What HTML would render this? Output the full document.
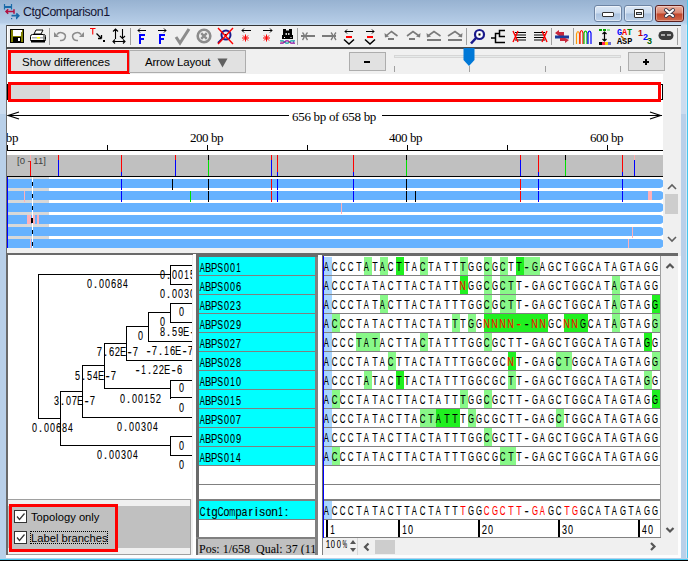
<!DOCTYPE html><html><head><meta charset="utf-8"><style>
*{margin:0;padding:0;box-sizing:border-box}
html,body{width:688px;height:561px;overflow:hidden;position:relative;background:#bcd1ea;font-family:"Liberation Sans",sans-serif}
.a{position:absolute}
.ct{font-family:"Liberation Sans",sans-serif;white-space:nowrap;color:#000;-webkit-text-stroke:0.1px currentColor}
.ct b{display:inline-block;font-weight:normal;text-align:center;height:15px}
.ct i{display:inline-block;font-style:normal}
</style></head><body>
<div class="a" style="left:0px;top:0px;width:688px;height:25px;background:linear-gradient(#97b2d1,#b6cde7 92%,#c4daf0 96%)"></div>
<div class="a" style="left:0px;top:25px;width:6px;height:536px;background:#b9d0e9"></div>
<div class="a" style="left:0px;top:25px;width:6px;height:89px;background:#cbdcef"></div>
<div class="a" style="left:681px;top:25px;width:7px;height:536px;background:#b9d0e9"></div>
<div class="a" style="left:681px;top:25px;width:6px;height:89px;background:#cbdcef"></div>
<div class="a" style="left:686px;top:25px;width:1px;height:536px;background:#d8e6f4"></div>
<div class="a" style="left:687px;top:0px;width:1px;height:561px;background:#46c6ee"></div>
<div class="a" style="left:0px;top:559px;width:688px;height:1px;background:#46c6ee"></div>
<div class="a" style="left:0px;top:560px;width:688px;height:1px;background:#000"></div>
<div class="a " style="left:23px;top:3.74px;font-family:'Liberation Sans';font-size:12.3px;line-height:16px;color:#141432;white-space:nowrap;letter-spacing:-0.4px">CtgComparison1</div>
<div class="a" style="left:594px;top:5px;width:28px;height:17px;border:1px solid #6d84a3;border-radius:3px;background:linear-gradient(#dce8f6 0,#c9daee 48%,#aac2df 52%,#bdd2ea 100%);box-shadow:inset 0 0 0 1px rgba(255,255,255,.5)"><div class="a" style="left:7px;top:6px;width:12px;height:5px;border:1px solid #333;background:#fff;border-radius:1px"></div></div>
<div class="a" style="left:624px;top:5px;width:29px;height:17px;border:1px solid #6d84a3;border-radius:3px;background:linear-gradient(#dce8f6 0,#c9daee 48%,#aac2df 52%,#bdd2ea 100%);box-shadow:inset 0 0 0 1px rgba(255,255,255,.5)"><div class="a" style="left:9px;top:3px;width:10px;height:9px;border:1px solid #333;background:#fff;border-radius:1px"><div class="a" style="left:1px;top:2px;width:6px;height:3px;border:1px solid #333;background:#c0d0e4"></div></div></div>
<div class="a" style="left:655px;top:5px;width:29px;height:17px;border:1px solid #5b1e1e;border-radius:3px;background:linear-gradient(#e9b0a0 0,#d98570 48%,#c2452a 52%,#d06a4e 100%);box-shadow:inset 0 0 0 1px rgba(255,255,255,.35)"><svg class="a" style="left:7px;top:1px" width="14" height="12"><path d="M3 3 L10 9 M10 3 L3 9" stroke="#3a3a4a" stroke-width="4" stroke-linecap="round"/><path d="M3 3 L10 9 M10 3 L3 9" stroke="#fff" stroke-width="2.2" stroke-linecap="round"/></svg></div>
<div class="a" style="left:6px;top:25px;width:675px;height:1px;background:#353535"></div>
<div class="a" style="left:6px;top:26px;width:675px;height:21px;background:#f0f0f0"></div>
<div class="a" style="left:6px;top:25px;width:1px;height:22px;background:#5a5a5a"></div>
<div class="a" style="left:7px;top:26px;width:1px;height:21px;background:#fff"></div>
<div class="a" style="left:6px;top:47px;width:675px;height:2px;background:#4a4a4a"></div>
<div class="a" style="left:6px;top:49px;width:675px;height:204px;background:#f0f0f0"></div>
<div class="a" style="left:6px;top:49px;width:1px;height:204px;background:#6d6d6d"></div>
<div class="a" style="left:8px;top:50px;width:122px;height:24px;border:3px solid #ff0000;background:#e1e1e1"></div>
<div class="a " style="left:22px;top:54.52px;font-family:'Liberation Sans';font-size:11.5px;line-height:15px;color:#000;white-space:nowrap;">Show differences</div>
<div class="a" style="left:129px;top:50px;width:117px;height:23px;border:1px solid #adadad;background:#e1e1e1"></div>
<div class="a " style="left:145px;top:54.52px;font-family:'Liberation Sans';font-size:11.5px;line-height:15px;color:#000;white-space:nowrap;letter-spacing:-0.2px">Arrow Layout</div>
<svg class="a" style="left:217px;top:58px" width="11" height="10"><path d="M0.5 0.5 H10.5 L5.5 9.5 Z" fill="#606060"/></svg>
<div class="a" style="left:349px;top:52px;width:37px;height:19px;border:1px solid #adadad;background:#e1e1e1"><div class="a" style="left:14px;top:8px;width:6px;height:2px;background:#000"></div></div>
<div class="a" style="left:628px;top:52px;width:37px;height:19px;border:1px solid #adadad;background:#e1e1e1"><div class="a" style="left:14px;top:8px;width:6px;height:1.5px;background:#000"></div><div class="a" style="left:16.25px;top:5.75px;width:1.5px;height:6px;background:#000"></div></div>
<div class="a" style="left:394px;top:55px;width:227px;height:3px;background:#e7eaea;border:1px solid #d6d6d6"></div>
<div class="a" style="left:394px;top:66px;width:1px;height:6px;background:#a0a0a0"></div>
<div class="a" style="left:469px;top:66px;width:1px;height:6px;background:#a0a0a0"></div>
<div class="a" style="left:545px;top:66px;width:1px;height:6px;background:#a0a0a0"></div>
<div class="a" style="left:620px;top:66px;width:1px;height:6px;background:#a0a0a0"></div>
<svg class="a" style="left:463px;top:48px" width="12" height="19"><path d="M0.5 0 H11.5 V12 L6 18 L0.5 12 Z" fill="#0078d7"/></svg>
<div class="a" style="left:7px;top:74px;width:656px;height:174px;background:#fff"></div>
<div class="a" style="left:8px;top:82px;width:653px;height:20px;border:3px solid #ff0000;background:#fff"></div>
<div class="a" style="left:11px;top:85px;width:39px;height:14px;background:#d8d8d8"></div>
<div class="a" style="left:661px;top:84px;width:2px;height:16px;border:1px solid #000;border-left:none"></div>
<div class="a" style="left:8px;top:115px;width:281px;height:1px;background:#000"></div>
<div class="a" style="left:382px;top:115px;width:280px;height:1px;background:#000"></div>
<svg class="a" style="left:7px;top:109px" width="656" height="13"><path d="M12 3 L1.5 6.5 L12 10" stroke="#000" fill="none" stroke-width="1.2"/><path d="M643 3 L653.5 6.5 L643 10" stroke="#000" fill="none" stroke-width="1.2"/></svg>
<div class="a " style="left:292px;top:108.11px;font-family:'Liberation Serif';font-size:13px;line-height:17px;color:#000;white-space:nowrap;letter-spacing:-0.3px">656 bp of 658 bp</div>
<div class="a" style="left:7px;top:150px;width:656px;height:1px;background:#000"></div>
<div class="a" style="left:7px;top:145px;width:1px;height:5px;background:#000"></div>
<div class="a" style="left:107px;top:145px;width:1px;height:5px;background:#000"></div>
<div class="a" style="left:207px;top:145px;width:1px;height:5px;background:#000"></div>
<div class="a" style="left:307px;top:145px;width:1px;height:5px;background:#000"></div>
<div class="a" style="left:407px;top:145px;width:1px;height:5px;background:#000"></div>
<div class="a" style="left:507px;top:145px;width:1px;height:5px;background:#000"></div>
<div class="a" style="left:607px;top:145px;width:1px;height:5px;background:#000"></div>
<div class="a " style="left:-3px;top:129.11px;font-family:'Liberation Serif';font-size:13px;line-height:17px;color:#000;white-space:nowrap;letter-spacing:-0.45px">0 bp</div>
<div class="a " style="left:190px;top:129.11px;font-family:'Liberation Serif';font-size:13px;line-height:17px;color:#000;white-space:nowrap;letter-spacing:-0.45px">200 bp</div>
<div class="a " style="left:389px;top:129.11px;font-family:'Liberation Serif';font-size:13px;line-height:17px;color:#000;white-space:nowrap;letter-spacing:-0.45px">400 bp</div>
<div class="a " style="left:590px;top:129.11px;font-family:'Liberation Serif';font-size:13px;line-height:17px;color:#000;white-space:nowrap;letter-spacing:-0.45px">600 bp</div>
<div class="a" style="left:0px;top:125px;width:6px;height:30px;background:#b9d0e9"></div>
<div class="a" style="left:6px;top:125px;width:1px;height:30px;background:#6d6d6d"></div>
<div class="a" style="left:7px;top:155px;width:656px;height:21px;background:#c0c0c0"></div>
<div class="a" style="left:7px;top:176px;width:656px;height:1px;background:#000"></div>
<div class="a " style="left:17px;top:154.71px;font-family:'Liberation Sans';font-size:9.5px;line-height:12px;color:#404040;white-space:nowrap;">[0 - 11]</div>
<div class="a" style="left:30px;top:155px;width:1px;height:6px;background:#ffb0b0"></div>
<div class="a" style="left:30px;top:161px;width:1px;height:15px;background:#ff0000"></div>
<div class="a" style="left:58px;top:155px;width:1px;height:5px;background:#ff0000"></div>
<div class="a" style="left:58px;top:160px;width:1px;height:16px;background:#0000ff"></div>
<div class="a" style="left:121px;top:155px;width:1px;height:17px;background:#ff0000"></div>
<div class="a" style="left:121px;top:172px;width:1px;height:4px;background:#0000ff"></div>
<div class="a" style="left:175px;top:155px;width:1px;height:5px;background:#ff0000"></div>
<div class="a" style="left:175px;top:160px;width:1px;height:16px;background:#0000ff"></div>
<div class="a" style="left:208px;top:155px;width:1px;height:5px;background:#000"></div>
<div class="a" style="left:208px;top:160px;width:1px;height:16px;background:#00e000"></div>
<div class="a" style="left:271px;top:155px;width:1px;height:5px;background:#ff0000"></div>
<div class="a" style="left:271px;top:160px;width:1px;height:16px;background:#0000ff"></div>
<div class="a" style="left:277px;top:155px;width:1px;height:17px;background:#ff0000"></div>
<div class="a" style="left:277px;top:172px;width:1px;height:4px;background:#0000ff"></div>
<div class="a" style="left:353px;top:155px;width:1px;height:17px;background:#ff0000"></div>
<div class="a" style="left:353px;top:172px;width:1px;height:4px;background:#0000ff"></div>
<div class="a" style="left:406px;top:155px;width:1px;height:5px;background:#000"></div>
<div class="a" style="left:406px;top:160px;width:1px;height:16px;background:#00e000"></div>
<div class="a" style="left:520px;top:155px;width:1px;height:5px;background:#ff0000"></div>
<div class="a" style="left:520px;top:160px;width:1px;height:16px;background:#0000ff"></div>
<div class="a" style="left:538px;top:155px;width:1px;height:17px;background:#ff0000"></div>
<div class="a" style="left:538px;top:172px;width:1px;height:4px;background:#0000ff"></div>
<div class="a" style="left:565px;top:155px;width:1px;height:5px;background:#000"></div>
<div class="a" style="left:565px;top:160px;width:1px;height:16px;background:#00e000"></div>
<div class="a" style="left:622px;top:155px;width:1px;height:17px;background:#ff0000"></div>
<div class="a" style="left:622px;top:172px;width:1px;height:4px;background:#0000ff"></div>
<div class="a" style="left:634px;top:155px;width:1px;height:5px;background:#ffb0b0"></div>
<div class="a" style="left:634px;top:160px;width:1px;height:16px;background:#0000ff"></div>
<div class="a" style="left:7px;top:177px;width:656px;height:71px;background:#fff"></div>
<div class="a" style="left:8px;top:177px;width:41px;height:71px;background:#d8d8d8"></div>
<div class="a" style="left:8px;top:179px;width:656px;height:9px;background:#66b2ff;border-radius:0 5px 5px 0"></div>
<div class="a" style="left:8px;top:191px;width:656px;height:9px;background:#66b2ff;border-radius:0 5px 5px 0"></div>
<div class="a" style="left:8px;top:203px;width:656px;height:9px;background:#66b2ff;border-radius:0 5px 5px 0"></div>
<div class="a" style="left:8px;top:215px;width:656px;height:9px;background:#66b2ff;border-radius:0 5px 5px 0"></div>
<div class="a" style="left:8px;top:227px;width:656px;height:9px;background:#66b2ff;border-radius:0 5px 5px 0"></div>
<div class="a" style="left:8px;top:239px;width:656px;height:9px;background:#66b2ff;border-radius:0 5px 5px 0"></div>
<div class="a" style="left:7px;top:177px;width:1px;height:71px;background:#0000ff"></div>
<div class="a" style="left:32px;top:177px;width:1px;height:71px;background:#fff"></div>
<div class="a" style="left:32px;top:182px;width:1px;height:4px;background:#000"></div>
<div class="a" style="left:32px;top:194px;width:1px;height:4px;background:#000"></div>
<div class="a" style="left:32px;top:206px;width:1px;height:4px;background:#000"></div>
<div class="a" style="left:32px;top:218px;width:1px;height:4px;background:#000"></div>
<div class="a" style="left:32px;top:230px;width:1px;height:4px;background:#000"></div>
<div class="a" style="left:32px;top:242px;width:1px;height:4px;background:#000"></div>
<div class="a" style="left:121px;top:179px;width:1px;height:11px;background:#0000ff"></div>
<div class="a" style="left:172px;top:179px;width:1px;height:11px;background:#000"></div>
<div class="a" style="left:208px;top:179px;width:1px;height:11px;background:#000"></div>
<div class="a" style="left:271px;top:179px;width:1px;height:11px;background:#ff0000"></div>
<div class="a" style="left:277px;top:179px;width:1px;height:11px;background:#0000ff"></div>
<div class="a" style="left:353px;top:179px;width:1px;height:11px;background:#0000ff"></div>
<div class="a" style="left:406px;top:179px;width:1px;height:11px;background:#000"></div>
<div class="a" style="left:520px;top:179px;width:1px;height:11px;background:#ff0000"></div>
<div class="a" style="left:538px;top:179px;width:1px;height:11px;background:#0000ff"></div>
<div class="a" style="left:622px;top:179px;width:1px;height:11px;background:#0000ff"></div>
<div class="a" style="left:121px;top:191px;width:1px;height:11px;background:#0000ff"></div>
<div class="a" style="left:190px;top:191px;width:1px;height:11px;background:#00e000"></div>
<div class="a" style="left:208px;top:191px;width:1px;height:11px;background:#000"></div>
<div class="a" style="left:271px;top:191px;width:1px;height:11px;background:#ff0000"></div>
<div class="a" style="left:277px;top:191px;width:1px;height:11px;background:#0000ff"></div>
<div class="a" style="left:353px;top:191px;width:1px;height:11px;background:#0000ff"></div>
<div class="a" style="left:406px;top:191px;width:1px;height:11px;background:#000"></div>
<div class="a" style="left:415px;top:191px;width:1px;height:11px;background:#000"></div>
<div class="a" style="left:520px;top:191px;width:1px;height:11px;background:#ff0000"></div>
<div class="a" style="left:538px;top:191px;width:1px;height:11px;background:#0000ff"></div>
<div class="a" style="left:622px;top:191px;width:1px;height:11px;background:#0000ff"></div>
<div class="a" style="left:648px;top:191px;width:4px;height:9px;background:#ffb0b8"></div>
<div class="a" style="left:24px;top:191px;width:1px;height:11px;background:#ffb0b8"></div>
<div class="a" style="left:341px;top:203px;width:1px;height:11px;background:#ffb0b8"></div>
<div class="a" style="left:27px;top:215px;width:4px;height:9px;background:#ffb0b8"></div>
<div class="a" style="left:33px;top:215px;width:2px;height:9px;background:#ffb0b8"></div>
<div class="a" style="left:37px;top:215px;width:2px;height:9px;background:#ffb0b8"></div>
<div class="a" style="left:632px;top:227px;width:1px;height:11px;background:#ffb0b8"></div>
<div class="a" style="left:628px;top:239px;width:1px;height:11px;background:#ffb0b8"></div>
<div class="a" style="left:30px;top:239px;width:1px;height:11px;background:#ffb0b8"></div>
<div class="a" style="left:31px;top:218px;width:2px;height:5px;background:#000"></div>
<div class="a" style="left:7px;top:84px;width:1px;height:16px;background:#000"></div>
<div class="a" style="left:663px;top:74px;width:18px;height:176px;background:#f0f0f0"></div>
<svg class="a" style="left:664px;top:180px" width="16" height="70"><path d="M4 9 L8 5 L12 9" stroke="#606060" stroke-width="1.6" fill="none"/><path d="M4 57 L8 61 L12 57" stroke="#606060" stroke-width="1.6" fill="none"/></svg>
<div class="a" style="left:665px;top:194px;width:13px;height:20px;background:#cdcdcd"></div>
<div class="a" style="left:7px;top:248px;width:674px;height:5px;background:#f0f0f0"></div>
<div class="a" style="left:6px;top:253px;width:675px;height:302px;background:#f0f0f0"></div>
<div class="a" style="left:678px;top:256px;width:3px;height:302px;background:#fdfdfd"></div>
<div class="a" style="left:6px;top:555px;width:675px;height:3px;background:#fdfdfd"></div>
<div class="a" style="left:0px;top:558px;width:688px;height:1px;background:#b9d0e9"></div>
<div class="a" style="left:6px;top:253px;width:672px;height:2px;background:#6a6a6a"></div>
<div class="a" style="left:6px;top:253px;width:2px;height:302px;background:#6a6a6a"></div>
<div class="a" style="left:8px;top:255px;width:184px;height:244px;background:#fff"></div>
<div class="a" style="left:193px;top:254px;width:3px;height:301px;background:#fff"></div>
<div class="a" style="left:8px;top:499px;width:183px;height:1px;background:#a0a0a0"></div>
<div class="a" style="left:190px;top:499px;width:1px;height:56px;background:#a0a0a0"></div>
<div class="a" style="left:8px;top:500px;width:182px;height:54px;background:#f0f0f0"></div>
<div class="a" style="left:8px;top:506px;width:182px;height:42px;background:#c0c0c0"></div>
<div class="a" style="left:8px;top:554px;width:183px;height:1px;background:#a0a0a0"></div>
<div class="a" style="left:9px;top:504px;width:109px;height:48px;border:3px solid #ff0000;background:#c0c0c0"></div>
<div class="a" style="left:14px;top:510px;width:13px;height:13px;border:1px solid #333;background:#fff"><svg class="a" style="left:0;top:0" width="11" height="11"><path d="M2 5.5 L4.5 8.5 L9.5 2.5" stroke="#333" stroke-width="1.2" fill="none"/></svg></div>
<div class="a" style="left:14px;top:531px;width:13px;height:13px;border:1px solid #333;background:#fff"><svg class="a" style="left:0;top:0" width="11" height="11"><path d="M2 5.5 L4.5 8.5 L9.5 2.5" stroke="#333" stroke-width="1.2" fill="none"/></svg></div>
<div class="a " style="left:31px;top:509.62px;font-family:'Liberation Sans';font-size:11.2px;line-height:15px;color:#000;white-space:nowrap;">Topology only</div>
<div class="a" style="left:30px;top:531px;width:78px;height:13px;border:1px dotted #000"></div>
<div class="a " style="left:31px;top:530.62px;font-family:'Liberation Sans';font-size:11.2px;line-height:15px;color:#000;white-space:nowrap;">Label branches</div>
<div class="a" style="left:8px;top:255px;width:184px;height:243px;overflow:hidden">
<div class="a" style="left:30px;top:19px;width:133px;height:1px;background:#000"></div>
<div class="a" style="left:162px;top:10px;width:23px;height:1px;background:#000"></div>
<div class="a" style="left:162px;top:29px;width:23px;height:1px;background:#000"></div>
<div class="a" style="left:140px;top:57px;width:23px;height:1px;background:#000"></div>
<div class="a" style="left:162px;top:48px;width:23px;height:1px;background:#000"></div>
<div class="a" style="left:162px;top:67px;width:23px;height:1px;background:#000"></div>
<div class="a" style="left:140px;top:86px;width:45px;height:1px;background:#000"></div>
<div class="a" style="left:118px;top:71px;width:23px;height:1px;background:#000"></div>
<div class="a" style="left:118px;top:105px;width:67px;height:1px;background:#000"></div>
<div class="a" style="left:96px;top:88px;width:23px;height:1px;background:#000"></div>
<div class="a" style="left:74px;top:110px;width:23px;height:1px;background:#000"></div>
<div class="a" style="left:96px;top:133px;width:67px;height:1px;background:#000"></div>
<div class="a" style="left:162px;top:125px;width:23px;height:1px;background:#000"></div>
<div class="a" style="left:162px;top:142px;width:23px;height:1px;background:#000"></div>
<div class="a" style="left:74px;top:162px;width:111px;height:1px;background:#000"></div>
<div class="a" style="left:52px;top:136px;width:23px;height:1px;background:#000"></div>
<div class="a" style="left:30px;top:163px;width:23px;height:1px;background:#000"></div>
<div class="a" style="left:52px;top:190px;width:111px;height:1px;background:#000"></div>
<div class="a" style="left:162px;top:181px;width:23px;height:1px;background:#000"></div>
<div class="a" style="left:162px;top:200px;width:23px;height:1px;background:#000"></div>
<div class="a" style="left:30px;top:19px;width:1px;height:145px;background:#000"></div>
<div class="a" style="left:162px;top:10px;width:1px;height:20px;background:#000"></div>
<div class="a" style="left:162px;top:48px;width:1px;height:20px;background:#000"></div>
<div class="a" style="left:140px;top:57px;width:1px;height:30px;background:#000"></div>
<div class="a" style="left:118px;top:71px;width:1px;height:35px;background:#000"></div>
<div class="a" style="left:96px;top:88px;width:1px;height:46px;background:#000"></div>
<div class="a" style="left:74px;top:110px;width:1px;height:53px;background:#000"></div>
<div class="a" style="left:52px;top:136px;width:1px;height:55px;background:#000"></div>
<div class="a" style="left:162px;top:125px;width:1px;height:19px;background:#000"></div>
<div class="a" style="left:162px;top:181px;width:1px;height:20px;background:#000"></div>
<div class="a ct" style="left:79px;top:21.73px;font-size:12.6px;line-height:15px;"><b style="width:13px;margin-left:-4.0px;margin-right:-3.0px"><i style="transform:scaleX(0.716)">0</i></b><b style="width:13px;margin-left:-4.0px;margin-right:-3.0px"><i style="transform:scaleX(1.000)">.</i></b><b style="width:13px;margin-left:-4.0px;margin-right:-3.0px"><i style="transform:scaleX(0.716)">0</i></b><b style="width:13px;margin-left:-4.0px;margin-right:-3.0px"><i style="transform:scaleX(0.716)">0</i></b><b style="width:13px;margin-left:-4.0px;margin-right:-3.0px"><i style="transform:scaleX(0.739)">6</i></b><b style="width:13px;margin-left:-4.0px;margin-right:-3.0px"><i style="transform:scaleX(0.727)">8</i></b><b style="width:13px;margin-left:-4.0px;margin-right:-3.0px"><i style="transform:scaleX(0.683)">4</i></b></div>
<div class="a ct" style="left:152px;top:12.73px;font-size:12.6px;line-height:15px;"><b style="width:13px;margin-left:-4.0px;margin-right:-3.0px"><i style="transform:scaleX(0.716)">0</i></b><b style="width:13px;margin-left:-4.0px;margin-right:-3.0px"><i style="transform:scaleX(1.000)">.</i></b><b style="width:13px;margin-left:-4.0px;margin-right:-3.0px"><i style="transform:scaleX(0.716)">0</i></b><b style="width:13px;margin-left:-4.0px;margin-right:-3.0px"><i style="transform:scaleX(0.716)">0</i></b><b style="width:13px;margin-left:-4.0px;margin-right:-3.0px"><i style="transform:scaleX(0.645)">1</i></b><b style="width:13px;margin-left:-4.0px;margin-right:-3.0px"><i style="transform:scaleX(0.716)">5</i></b></div>
<div class="a ct" style="left:152px;top:31.73px;font-size:12.6px;line-height:15px;"><b style="width:13px;margin-left:-4.0px;margin-right:-3.0px"><i style="transform:scaleX(0.716)">0</i></b><b style="width:13px;margin-left:-4.0px;margin-right:-3.0px"><i style="transform:scaleX(1.000)">.</i></b><b style="width:13px;margin-left:-4.0px;margin-right:-3.0px"><i style="transform:scaleX(0.716)">0</i></b><b style="width:13px;margin-left:-4.0px;margin-right:-3.0px"><i style="transform:scaleX(0.716)">0</i></b><b style="width:13px;margin-left:-4.0px;margin-right:-3.0px"><i style="transform:scaleX(0.716)">3</i></b><b style="width:13px;margin-left:-4.0px;margin-right:-3.0px"><i style="transform:scaleX(0.716)">0</i></b></div>
<div class="a ct" style="left:171px;top:49.73px;font-size:12.6px;line-height:15px;"><b style="width:13px;margin-left:-4.0px;margin-right:-3.0px"><i style="transform:scaleX(0.716)">0</i></b></div>
<div class="a ct" style="left:152px;top:59.73px;font-size:12.6px;line-height:15px;"><b style="width:13px;margin-left:-4.0px;margin-right:-3.0px"><i style="transform:scaleX(0.716)">0</i></b></div>
<div class="a ct" style="left:152px;top:69.73px;font-size:12.6px;line-height:15px;"><b style="width:13px;margin-left:-4.0px;margin-right:-3.0px"><i style="transform:scaleX(0.727)">8</i></b><b style="width:13px;margin-left:-4.0px;margin-right:-3.0px"><i style="transform:scaleX(1.000)">.</i></b><b style="width:13px;margin-left:-4.0px;margin-right:-3.0px"><i style="transform:scaleX(0.716)">5</i></b><b style="width:13px;margin-left:-4.0px;margin-right:-3.0px"><i style="transform:scaleX(0.739)">9</i></b><b style="width:13px;margin-left:-4.0px;margin-right:-3.0px"><i style="transform:scaleX(0.737)">E</i></b><b style="width:13px;margin-left:-4.0px;margin-right:-3.0px"><i style="transform:scaleX(1.000)">-</i></b></div>
<div class="a ct" style="left:130px;top:73.73px;font-size:12.6px;line-height:15px;"><b style="width:13px;margin-left:-4.0px;margin-right:-3.0px"><i style="transform:scaleX(0.716)">0</i></b></div>
<div class="a ct" style="left:89px;top:89.73px;font-size:12.6px;line-height:15px;"><b style="width:13px;margin-left:-4.0px;margin-right:-3.0px"><i style="transform:scaleX(0.752)">7</i></b><b style="width:13px;margin-left:-4.0px;margin-right:-3.0px"><i style="transform:scaleX(1.000)">.</i></b><b style="width:13px;margin-left:-4.0px;margin-right:-3.0px"><i style="transform:scaleX(0.739)">6</i></b><b style="width:13px;margin-left:-4.0px;margin-right:-3.0px"><i style="transform:scaleX(0.752)">2</i></b><b style="width:13px;margin-left:-4.0px;margin-right:-3.0px"><i style="transform:scaleX(0.737)">E</i></b><b style="width:13px;margin-left:-4.0px;margin-right:-3.0px"><i style="transform:scaleX(1.000)">-</i></b><b style="width:13px;margin-left:-4.0px;margin-right:-3.0px"><i style="transform:scaleX(0.752)">7</i></b></div>
<div class="a ct" style="left:138px;top:88.73px;font-size:12.6px;line-height:15px;"><b style="width:13px;margin-left:-4.0px;margin-right:-3.0px"><i style="transform:scaleX(1.000)">-</i></b><b style="width:13px;margin-left:-4.0px;margin-right:-3.0px"><i style="transform:scaleX(0.752)">7</i></b><b style="width:13px;margin-left:-4.0px;margin-right:-3.0px"><i style="transform:scaleX(1.000)">.</i></b><b style="width:13px;margin-left:-4.0px;margin-right:-3.0px"><i style="transform:scaleX(0.645)">1</i></b><b style="width:13px;margin-left:-4.0px;margin-right:-3.0px"><i style="transform:scaleX(0.739)">6</i></b><b style="width:13px;margin-left:-4.0px;margin-right:-3.0px"><i style="transform:scaleX(0.737)">E</i></b><b style="width:13px;margin-left:-4.0px;margin-right:-3.0px"><i style="transform:scaleX(1.000)">-</i></b><b style="width:13px;margin-left:-4.0px;margin-right:-3.0px"><i style="transform:scaleX(0.752)">7</i></b></div>
<div class="a ct" style="left:127px;top:107.73px;font-size:12.6px;line-height:15px;"><b style="width:13px;margin-left:-4.0px;margin-right:-3.0px"><i style="transform:scaleX(1.000)">-</i></b><b style="width:13px;margin-left:-4.0px;margin-right:-3.0px"><i style="transform:scaleX(0.645)">1</i></b><b style="width:13px;margin-left:-4.0px;margin-right:-3.0px"><i style="transform:scaleX(1.000)">.</i></b><b style="width:13px;margin-left:-4.0px;margin-right:-3.0px"><i style="transform:scaleX(0.752)">2</i></b><b style="width:13px;margin-left:-4.0px;margin-right:-3.0px"><i style="transform:scaleX(0.752)">2</i></b><b style="width:13px;margin-left:-4.0px;margin-right:-3.0px"><i style="transform:scaleX(0.737)">E</i></b><b style="width:13px;margin-left:-4.0px;margin-right:-3.0px"><i style="transform:scaleX(1.000)">-</i></b><b style="width:13px;margin-left:-4.0px;margin-right:-3.0px"><i style="transform:scaleX(0.739)">6</i></b></div>
<div class="a ct" style="left:67px;top:113.73px;font-size:12.6px;line-height:15px;"><b style="width:13px;margin-left:-4.0px;margin-right:-3.0px"><i style="transform:scaleX(0.716)">5</i></b><b style="width:13px;margin-left:-4.0px;margin-right:-3.0px"><i style="transform:scaleX(1.000)">.</i></b><b style="width:13px;margin-left:-4.0px;margin-right:-3.0px"><i style="transform:scaleX(0.716)">5</i></b><b style="width:13px;margin-left:-4.0px;margin-right:-3.0px"><i style="transform:scaleX(0.683)">4</i></b><b style="width:13px;margin-left:-4.0px;margin-right:-3.0px"><i style="transform:scaleX(0.737)">E</i></b><b style="width:13px;margin-left:-4.0px;margin-right:-3.0px"><i style="transform:scaleX(1.000)">-</i></b><b style="width:13px;margin-left:-4.0px;margin-right:-3.0px"><i style="transform:scaleX(0.752)">7</i></b></div>
<div class="a ct" style="left:171px;top:125.73px;font-size:12.6px;line-height:15px;"><b style="width:13px;margin-left:-4.0px;margin-right:-3.0px"><i style="transform:scaleX(0.716)">0</i></b></div>
<div class="a ct" style="left:112px;top:136.73px;font-size:12.6px;line-height:15px;"><b style="width:13px;margin-left:-4.0px;margin-right:-3.0px"><i style="transform:scaleX(0.716)">0</i></b><b style="width:13px;margin-left:-4.0px;margin-right:-3.0px"><i style="transform:scaleX(1.000)">.</i></b><b style="width:13px;margin-left:-4.0px;margin-right:-3.0px"><i style="transform:scaleX(0.716)">0</i></b><b style="width:13px;margin-left:-4.0px;margin-right:-3.0px"><i style="transform:scaleX(0.716)">0</i></b><b style="width:13px;margin-left:-4.0px;margin-right:-3.0px"><i style="transform:scaleX(0.645)">1</i></b><b style="width:13px;margin-left:-4.0px;margin-right:-3.0px"><i style="transform:scaleX(0.716)">5</i></b><b style="width:13px;margin-left:-4.0px;margin-right:-3.0px"><i style="transform:scaleX(0.752)">2</i></b></div>
<div class="a ct" style="left:171px;top:145.73px;font-size:12.6px;line-height:15px;"><b style="width:13px;margin-left:-4.0px;margin-right:-3.0px"><i style="transform:scaleX(0.716)">0</i></b></div>
<div class="a ct" style="left:46px;top:138.73px;font-size:12.6px;line-height:15px;"><b style="width:13px;margin-left:-4.0px;margin-right:-3.0px"><i style="transform:scaleX(0.716)">3</i></b><b style="width:13px;margin-left:-4.0px;margin-right:-3.0px"><i style="transform:scaleX(1.000)">.</i></b><b style="width:13px;margin-left:-4.0px;margin-right:-3.0px"><i style="transform:scaleX(0.716)">0</i></b><b style="width:13px;margin-left:-4.0px;margin-right:-3.0px"><i style="transform:scaleX(0.752)">7</i></b><b style="width:13px;margin-left:-4.0px;margin-right:-3.0px"><i style="transform:scaleX(0.737)">E</i></b><b style="width:13px;margin-left:-4.0px;margin-right:-3.0px"><i style="transform:scaleX(1.000)">-</i></b><b style="width:13px;margin-left:-4.0px;margin-right:-3.0px"><i style="transform:scaleX(0.752)">7</i></b></div>
<div class="a ct" style="left:24px;top:165.73px;font-size:12.6px;line-height:15px;"><b style="width:13px;margin-left:-4.0px;margin-right:-3.0px"><i style="transform:scaleX(0.716)">0</i></b><b style="width:13px;margin-left:-4.0px;margin-right:-3.0px"><i style="transform:scaleX(1.000)">.</i></b><b style="width:13px;margin-left:-4.0px;margin-right:-3.0px"><i style="transform:scaleX(0.716)">0</i></b><b style="width:13px;margin-left:-4.0px;margin-right:-3.0px"><i style="transform:scaleX(0.716)">0</i></b><b style="width:13px;margin-left:-4.0px;margin-right:-3.0px"><i style="transform:scaleX(0.739)">6</i></b><b style="width:13px;margin-left:-4.0px;margin-right:-3.0px"><i style="transform:scaleX(0.727)">8</i></b><b style="width:13px;margin-left:-4.0px;margin-right:-3.0px"><i style="transform:scaleX(0.683)">4</i></b></div>
<div class="a ct" style="left:109px;top:164.73px;font-size:12.6px;line-height:15px;"><b style="width:13px;margin-left:-4.0px;margin-right:-3.0px"><i style="transform:scaleX(0.716)">0</i></b><b style="width:13px;margin-left:-4.0px;margin-right:-3.0px"><i style="transform:scaleX(1.000)">.</i></b><b style="width:13px;margin-left:-4.0px;margin-right:-3.0px"><i style="transform:scaleX(0.716)">0</i></b><b style="width:13px;margin-left:-4.0px;margin-right:-3.0px"><i style="transform:scaleX(0.716)">0</i></b><b style="width:13px;margin-left:-4.0px;margin-right:-3.0px"><i style="transform:scaleX(0.716)">3</i></b><b style="width:13px;margin-left:-4.0px;margin-right:-3.0px"><i style="transform:scaleX(0.716)">0</i></b><b style="width:13px;margin-left:-4.0px;margin-right:-3.0px"><i style="transform:scaleX(0.683)">4</i></b></div>
<div class="a ct" style="left:171px;top:183.73px;font-size:12.6px;line-height:15px;"><b style="width:13px;margin-left:-4.0px;margin-right:-3.0px"><i style="transform:scaleX(0.716)">0</i></b></div>
<div class="a ct" style="left:89px;top:192.73px;font-size:12.6px;line-height:15px;"><b style="width:13px;margin-left:-4.0px;margin-right:-3.0px"><i style="transform:scaleX(0.716)">0</i></b><b style="width:13px;margin-left:-4.0px;margin-right:-3.0px"><i style="transform:scaleX(1.000)">.</i></b><b style="width:13px;margin-left:-4.0px;margin-right:-3.0px"><i style="transform:scaleX(0.716)">0</i></b><b style="width:13px;margin-left:-4.0px;margin-right:-3.0px"><i style="transform:scaleX(0.716)">0</i></b><b style="width:13px;margin-left:-4.0px;margin-right:-3.0px"><i style="transform:scaleX(0.716)">3</i></b><b style="width:13px;margin-left:-4.0px;margin-right:-3.0px"><i style="transform:scaleX(0.716)">0</i></b><b style="width:13px;margin-left:-4.0px;margin-right:-3.0px"><i style="transform:scaleX(0.683)">4</i></b></div>
<div class="a ct" style="left:171px;top:202.73px;font-size:12.6px;line-height:15px;"><b style="width:13px;margin-left:-4.0px;margin-right:-3.0px"><i style="transform:scaleX(0.716)">0</i></b></div>
</div>
<div class="a" style="left:196px;top:253px;width:126px;height:4px;background:#6a6a6a"></div>
<div class="a" style="left:196px;top:253px;width:3px;height:302px;background:#6a6a6a"></div>
<div class="a" style="left:199px;top:257px;width:116px;height:281px;background:#fff"></div>
<div class="a" style="left:199px;top:257px;width:116px;height:18px;background:#00ffff"></div>
<div class="a" style="left:199px;top:275px;width:116px;height:1px;background:#808080"></div>
<div class="a ct" style="left:200px;top:260.73px;font-size:12.6px;line-height:15px;"><b style="width:13px;margin-left:-4.0px;margin-right:-3.0px"><i style="transform:scaleX(0.600)">A</i></b><b style="width:13px;margin-left:-4.0px;margin-right:-3.0px"><i style="transform:scaleX(0.748)">B</i></b><b style="width:13px;margin-left:-4.0px;margin-right:-3.0px"><i style="transform:scaleX(0.748)">P</i></b><b style="width:13px;margin-left:-4.0px;margin-right:-3.0px"><i style="transform:scaleX(0.688)">S</i></b><b style="width:13px;margin-left:-4.0px;margin-right:-3.0px"><i style="transform:scaleX(0.716)">0</i></b><b style="width:13px;margin-left:-4.0px;margin-right:-3.0px"><i style="transform:scaleX(0.716)">0</i></b><b style="width:13px;margin-left:-4.0px;margin-right:-3.0px"><i style="transform:scaleX(0.645)">1</i></b></div>
<div class="a" style="left:199px;top:276px;width:116px;height:18px;background:#00ffff"></div>
<div class="a" style="left:199px;top:294px;width:116px;height:1px;background:#808080"></div>
<div class="a ct" style="left:200px;top:279.73px;font-size:12.6px;line-height:15px;"><b style="width:13px;margin-left:-4.0px;margin-right:-3.0px"><i style="transform:scaleX(0.600)">A</i></b><b style="width:13px;margin-left:-4.0px;margin-right:-3.0px"><i style="transform:scaleX(0.748)">B</i></b><b style="width:13px;margin-left:-4.0px;margin-right:-3.0px"><i style="transform:scaleX(0.748)">P</i></b><b style="width:13px;margin-left:-4.0px;margin-right:-3.0px"><i style="transform:scaleX(0.688)">S</i></b><b style="width:13px;margin-left:-4.0px;margin-right:-3.0px"><i style="transform:scaleX(0.716)">0</i></b><b style="width:13px;margin-left:-4.0px;margin-right:-3.0px"><i style="transform:scaleX(0.716)">0</i></b><b style="width:13px;margin-left:-4.0px;margin-right:-3.0px"><i style="transform:scaleX(0.739)">6</i></b></div>
<div class="a" style="left:199px;top:295px;width:116px;height:18px;background:#00ffff"></div>
<div class="a" style="left:199px;top:313px;width:116px;height:1px;background:#808080"></div>
<div class="a ct" style="left:200px;top:298.73px;font-size:12.6px;line-height:15px;"><b style="width:13px;margin-left:-4.0px;margin-right:-3.0px"><i style="transform:scaleX(0.600)">A</i></b><b style="width:13px;margin-left:-4.0px;margin-right:-3.0px"><i style="transform:scaleX(0.748)">B</i></b><b style="width:13px;margin-left:-4.0px;margin-right:-3.0px"><i style="transform:scaleX(0.748)">P</i></b><b style="width:13px;margin-left:-4.0px;margin-right:-3.0px"><i style="transform:scaleX(0.688)">S</i></b><b style="width:13px;margin-left:-4.0px;margin-right:-3.0px"><i style="transform:scaleX(0.716)">0</i></b><b style="width:13px;margin-left:-4.0px;margin-right:-3.0px"><i style="transform:scaleX(0.752)">2</i></b><b style="width:13px;margin-left:-4.0px;margin-right:-3.0px"><i style="transform:scaleX(0.716)">3</i></b></div>
<div class="a" style="left:199px;top:314px;width:116px;height:18px;background:#00ffff"></div>
<div class="a" style="left:199px;top:332px;width:116px;height:1px;background:#808080"></div>
<div class="a ct" style="left:200px;top:317.73px;font-size:12.6px;line-height:15px;"><b style="width:13px;margin-left:-4.0px;margin-right:-3.0px"><i style="transform:scaleX(0.600)">A</i></b><b style="width:13px;margin-left:-4.0px;margin-right:-3.0px"><i style="transform:scaleX(0.748)">B</i></b><b style="width:13px;margin-left:-4.0px;margin-right:-3.0px"><i style="transform:scaleX(0.748)">P</i></b><b style="width:13px;margin-left:-4.0px;margin-right:-3.0px"><i style="transform:scaleX(0.688)">S</i></b><b style="width:13px;margin-left:-4.0px;margin-right:-3.0px"><i style="transform:scaleX(0.716)">0</i></b><b style="width:13px;margin-left:-4.0px;margin-right:-3.0px"><i style="transform:scaleX(0.752)">2</i></b><b style="width:13px;margin-left:-4.0px;margin-right:-3.0px"><i style="transform:scaleX(0.739)">9</i></b></div>
<div class="a" style="left:199px;top:333px;width:116px;height:18px;background:#00ffff"></div>
<div class="a" style="left:199px;top:351px;width:116px;height:1px;background:#808080"></div>
<div class="a ct" style="left:200px;top:336.73px;font-size:12.6px;line-height:15px;"><b style="width:13px;margin-left:-4.0px;margin-right:-3.0px"><i style="transform:scaleX(0.600)">A</i></b><b style="width:13px;margin-left:-4.0px;margin-right:-3.0px"><i style="transform:scaleX(0.748)">B</i></b><b style="width:13px;margin-left:-4.0px;margin-right:-3.0px"><i style="transform:scaleX(0.748)">P</i></b><b style="width:13px;margin-left:-4.0px;margin-right:-3.0px"><i style="transform:scaleX(0.688)">S</i></b><b style="width:13px;margin-left:-4.0px;margin-right:-3.0px"><i style="transform:scaleX(0.716)">0</i></b><b style="width:13px;margin-left:-4.0px;margin-right:-3.0px"><i style="transform:scaleX(0.752)">2</i></b><b style="width:13px;margin-left:-4.0px;margin-right:-3.0px"><i style="transform:scaleX(0.752)">7</i></b></div>
<div class="a" style="left:199px;top:352px;width:116px;height:18px;background:#00ffff"></div>
<div class="a" style="left:199px;top:370px;width:116px;height:1px;background:#808080"></div>
<div class="a ct" style="left:200px;top:355.73px;font-size:12.6px;line-height:15px;"><b style="width:13px;margin-left:-4.0px;margin-right:-3.0px"><i style="transform:scaleX(0.600)">A</i></b><b style="width:13px;margin-left:-4.0px;margin-right:-3.0px"><i style="transform:scaleX(0.748)">B</i></b><b style="width:13px;margin-left:-4.0px;margin-right:-3.0px"><i style="transform:scaleX(0.748)">P</i></b><b style="width:13px;margin-left:-4.0px;margin-right:-3.0px"><i style="transform:scaleX(0.688)">S</i></b><b style="width:13px;margin-left:-4.0px;margin-right:-3.0px"><i style="transform:scaleX(0.716)">0</i></b><b style="width:13px;margin-left:-4.0px;margin-right:-3.0px"><i style="transform:scaleX(0.752)">2</i></b><b style="width:13px;margin-left:-4.0px;margin-right:-3.0px"><i style="transform:scaleX(0.727)">8</i></b></div>
<div class="a" style="left:199px;top:371px;width:116px;height:18px;background:#00ffff"></div>
<div class="a" style="left:199px;top:389px;width:116px;height:1px;background:#808080"></div>
<div class="a ct" style="left:200px;top:374.73px;font-size:12.6px;line-height:15px;"><b style="width:13px;margin-left:-4.0px;margin-right:-3.0px"><i style="transform:scaleX(0.600)">A</i></b><b style="width:13px;margin-left:-4.0px;margin-right:-3.0px"><i style="transform:scaleX(0.748)">B</i></b><b style="width:13px;margin-left:-4.0px;margin-right:-3.0px"><i style="transform:scaleX(0.748)">P</i></b><b style="width:13px;margin-left:-4.0px;margin-right:-3.0px"><i style="transform:scaleX(0.688)">S</i></b><b style="width:13px;margin-left:-4.0px;margin-right:-3.0px"><i style="transform:scaleX(0.716)">0</i></b><b style="width:13px;margin-left:-4.0px;margin-right:-3.0px"><i style="transform:scaleX(0.645)">1</i></b><b style="width:13px;margin-left:-4.0px;margin-right:-3.0px"><i style="transform:scaleX(0.716)">0</i></b></div>
<div class="a" style="left:199px;top:390px;width:116px;height:18px;background:#00ffff"></div>
<div class="a" style="left:199px;top:408px;width:116px;height:1px;background:#808080"></div>
<div class="a ct" style="left:200px;top:393.73px;font-size:12.6px;line-height:15px;"><b style="width:13px;margin-left:-4.0px;margin-right:-3.0px"><i style="transform:scaleX(0.600)">A</i></b><b style="width:13px;margin-left:-4.0px;margin-right:-3.0px"><i style="transform:scaleX(0.748)">B</i></b><b style="width:13px;margin-left:-4.0px;margin-right:-3.0px"><i style="transform:scaleX(0.748)">P</i></b><b style="width:13px;margin-left:-4.0px;margin-right:-3.0px"><i style="transform:scaleX(0.688)">S</i></b><b style="width:13px;margin-left:-4.0px;margin-right:-3.0px"><i style="transform:scaleX(0.716)">0</i></b><b style="width:13px;margin-left:-4.0px;margin-right:-3.0px"><i style="transform:scaleX(0.645)">1</i></b><b style="width:13px;margin-left:-4.0px;margin-right:-3.0px"><i style="transform:scaleX(0.716)">5</i></b></div>
<div class="a" style="left:199px;top:409px;width:116px;height:18px;background:#00ffff"></div>
<div class="a" style="left:199px;top:427px;width:116px;height:1px;background:#808080"></div>
<div class="a ct" style="left:200px;top:412.73px;font-size:12.6px;line-height:15px;"><b style="width:13px;margin-left:-4.0px;margin-right:-3.0px"><i style="transform:scaleX(0.600)">A</i></b><b style="width:13px;margin-left:-4.0px;margin-right:-3.0px"><i style="transform:scaleX(0.748)">B</i></b><b style="width:13px;margin-left:-4.0px;margin-right:-3.0px"><i style="transform:scaleX(0.748)">P</i></b><b style="width:13px;margin-left:-4.0px;margin-right:-3.0px"><i style="transform:scaleX(0.688)">S</i></b><b style="width:13px;margin-left:-4.0px;margin-right:-3.0px"><i style="transform:scaleX(0.716)">0</i></b><b style="width:13px;margin-left:-4.0px;margin-right:-3.0px"><i style="transform:scaleX(0.716)">0</i></b><b style="width:13px;margin-left:-4.0px;margin-right:-3.0px"><i style="transform:scaleX(0.752)">7</i></b></div>
<div class="a" style="left:199px;top:428px;width:116px;height:18px;background:#00ffff"></div>
<div class="a" style="left:199px;top:446px;width:116px;height:1px;background:#808080"></div>
<div class="a ct" style="left:200px;top:431.73px;font-size:12.6px;line-height:15px;"><b style="width:13px;margin-left:-4.0px;margin-right:-3.0px"><i style="transform:scaleX(0.600)">A</i></b><b style="width:13px;margin-left:-4.0px;margin-right:-3.0px"><i style="transform:scaleX(0.748)">B</i></b><b style="width:13px;margin-left:-4.0px;margin-right:-3.0px"><i style="transform:scaleX(0.748)">P</i></b><b style="width:13px;margin-left:-4.0px;margin-right:-3.0px"><i style="transform:scaleX(0.688)">S</i></b><b style="width:13px;margin-left:-4.0px;margin-right:-3.0px"><i style="transform:scaleX(0.716)">0</i></b><b style="width:13px;margin-left:-4.0px;margin-right:-3.0px"><i style="transform:scaleX(0.716)">0</i></b><b style="width:13px;margin-left:-4.0px;margin-right:-3.0px"><i style="transform:scaleX(0.739)">9</i></b></div>
<div class="a" style="left:199px;top:447px;width:116px;height:18px;background:#00ffff"></div>
<div class="a" style="left:199px;top:465px;width:116px;height:1px;background:#808080"></div>
<div class="a ct" style="left:200px;top:450.73px;font-size:12.6px;line-height:15px;"><b style="width:13px;margin-left:-4.0px;margin-right:-3.0px"><i style="transform:scaleX(0.600)">A</i></b><b style="width:13px;margin-left:-4.0px;margin-right:-3.0px"><i style="transform:scaleX(0.748)">B</i></b><b style="width:13px;margin-left:-4.0px;margin-right:-3.0px"><i style="transform:scaleX(0.748)">P</i></b><b style="width:13px;margin-left:-4.0px;margin-right:-3.0px"><i style="transform:scaleX(0.688)">S</i></b><b style="width:13px;margin-left:-4.0px;margin-right:-3.0px"><i style="transform:scaleX(0.716)">0</i></b><b style="width:13px;margin-left:-4.0px;margin-right:-3.0px"><i style="transform:scaleX(0.645)">1</i></b><b style="width:13px;margin-left:-4.0px;margin-right:-3.0px"><i style="transform:scaleX(0.683)">4</i></b></div>
<div class="a" style="left:199px;top:484px;width:116px;height:1px;background:#808080"></div>
<div class="a" style="left:199px;top:499px;width:116px;height:2px;background:#808080"></div>
<div class="a" style="left:199px;top:501px;width:116px;height:18px;background:#00ffff"></div>
<div class="a ct" style="left:200px;top:504.73px;font-size:12.6px;line-height:15px;"><b style="width:13px;margin-left:-4.0px;margin-right:-3.0px"><i style="transform:scaleX(0.629)">C</i></b><b style="width:13px;margin-left:-4.0px;margin-right:-3.0px"><i style="transform:scaleX(1.000)">t</i></b><b style="width:13px;margin-left:-4.0px;margin-right:-3.0px"><i style="transform:scaleX(0.874)">g</i></b><b style="width:13px;margin-left:-4.0px;margin-right:-3.0px"><i style="transform:scaleX(0.629)">C</i></b><b style="width:13px;margin-left:-4.0px;margin-right:-3.0px"><i style="transform:scaleX(0.832)">o</i></b><b style="width:13px;margin-left:-4.0px;margin-right:-3.0px"><i style="transform:scaleX(0.567)">m</i></b><b style="width:13px;margin-left:-4.0px;margin-right:-3.0px"><i style="transform:scaleX(0.874)">p</i></b><b style="width:13px;margin-left:-4.0px;margin-right:-3.0px"><i style="transform:scaleX(0.782)">a</i></b><b style="width:13px;margin-left:-4.0px;margin-right:-3.0px"><i style="transform:scaleX(1.000)">r</i></b><b style="width:13px;margin-left:-4.0px;margin-right:-3.0px"><i style="transform:scaleX(1.000)">i</i></b><b style="width:13px;margin-left:-4.0px;margin-right:-3.0px"><i style="transform:scaleX(0.921)">s</i></b><b style="width:13px;margin-left:-4.0px;margin-right:-3.0px"><i style="transform:scaleX(0.832)">o</i></b><b style="width:13px;margin-left:-4.0px;margin-right:-3.0px"><i style="transform:scaleX(0.938)">n</i></b><b style="width:13px;margin-left:-4.0px;margin-right:-3.0px"><i style="transform:scaleX(0.645)">1</i></b><b style="width:13px;margin-left:-4.0px;margin-right:-3.0px"><i style="transform:scaleX(1.000)">:</i></b></div>
<div class="a" style="left:199px;top:519px;width:116px;height:1px;background:#808080"></div>
<div class="a" style="left:196px;top:537px;width:122px;height:2px;background:#808080"></div>
<div class="a" style="left:198px;top:539px;width:117px;height:16px;background:#c0c0c0"></div>
<div class="a" style="left:199px;top:539px;width:117px;height:16px;overflow:hidden">
<div class="a " style="left:0px;top:1.95px;font-family:'Liberation Serif';font-size:12px;line-height:16px;color:#000;white-space:nowrap;">Pos: 1/658&nbsp; Qual: 37 (11</div>
</div>
<div class="a" style="left:315px;top:257px;width:3px;height:298px;background:#808080"></div>
<div class="a" style="left:318px;top:255px;width:4px;height:300px;background:#fff"></div>
<div class="a" style="left:322px;top:253px;width:356px;height:3px;background:#6a6a6a"></div>
<div class="a" style="left:322px;top:253px;width:1px;height:285px;background:#6a6a6a"></div>
<div class="a" style="left:323px;top:256px;width:337px;height:282px;background:#fff"></div>
<div class="a" style="left:660px;top:256px;width:1px;height:282px;background:#a0a0a0"></div>
<div class="a" style="left:364px;top:257px;width:8px;height:18px;background:#88f888"></div>
<div class="a" style="left:380px;top:257px;width:8px;height:18px;background:#88f888"></div>
<div class="a" style="left:396px;top:257px;width:8px;height:18px;background:#20f020"></div>
<div class="a" style="left:420px;top:257px;width:8px;height:18px;background:#88f888"></div>
<div class="a" style="left:460px;top:257px;width:8px;height:18px;background:#88f888"></div>
<div class="a" style="left:484px;top:257px;width:8px;height:18px;background:#88f888"></div>
<div class="a" style="left:500px;top:257px;width:8px;height:18px;background:#88f888"></div>
<div class="a" style="left:516px;top:257px;width:8px;height:18px;background:#20f020"></div>
<div class="a" style="left:524px;top:257px;width:8px;height:18px;background:#88f888"></div>
<div class="a" style="left:532px;top:257px;width:8px;height:18px;background:#88f888"></div>
<div class="a" style="left:324px;top:257px;width:8px;height:18px;background:#a8d4ff"></div>
<div class="a ct" style="left:324px;top:260.13px;font-size:12.6px;line-height:15px;"><b style="width:13px;margin-left:-4.0px;margin-right:-1.0px"><i style="transform:scaleX(0.600)">A</i></b><b style="width:13px;margin-left:-4.0px;margin-right:-1.0px"><i style="transform:scaleX(0.629)">C</i></b><b style="width:13px;margin-left:-4.0px;margin-right:-1.0px"><i style="transform:scaleX(0.629)">C</i></b><b style="width:13px;margin-left:-4.0px;margin-right:-1.0px"><i style="transform:scaleX(0.629)">C</i></b><b style="width:13px;margin-left:-4.0px;margin-right:-1.0px"><i style="transform:scaleX(0.707)">T</i></b><b style="width:13px;margin-left:-4.0px;margin-right:-1.0px"><i style="transform:scaleX(0.600)">A</i></b><b style="width:13px;margin-left:-4.0px;margin-right:-1.0px"><i style="transform:scaleX(0.707)">T</i></b><b style="width:13px;margin-left:-4.0px;margin-right:-1.0px"><i style="transform:scaleX(0.600)">A</i></b><b style="width:13px;margin-left:-4.0px;margin-right:-1.0px"><i style="transform:scaleX(0.629)">C</i></b><b style="width:13px;margin-left:-4.0px;margin-right:-1.0px"><i style="transform:scaleX(0.707)">T</i></b><b style="width:13px;margin-left:-4.0px;margin-right:-1.0px"><i style="transform:scaleX(0.707)">T</i></b><b style="width:13px;margin-left:-4.0px;margin-right:-1.0px"><i style="transform:scaleX(0.600)">A</i></b><b style="width:13px;margin-left:-4.0px;margin-right:-1.0px"><i style="transform:scaleX(0.629)">C</i></b><b style="width:13px;margin-left:-4.0px;margin-right:-1.0px"><i style="transform:scaleX(0.707)">T</i></b><b style="width:13px;margin-left:-4.0px;margin-right:-1.0px"><i style="transform:scaleX(0.600)">A</i></b><b style="width:13px;margin-left:-4.0px;margin-right:-1.0px"><i style="transform:scaleX(0.707)">T</i></b><b style="width:13px;margin-left:-4.0px;margin-right:-1.0px"><i style="transform:scaleX(0.707)">T</i></b><b style="width:13px;margin-left:-4.0px;margin-right:-1.0px"><i style="transform:scaleX(0.707)">T</i></b><b style="width:13px;margin-left:-4.0px;margin-right:-1.0px"><i style="transform:scaleX(0.614)">G</i></b><b style="width:13px;margin-left:-4.0px;margin-right:-1.0px"><i style="transform:scaleX(0.614)">G</i></b><b style="width:13px;margin-left:-4.0px;margin-right:-1.0px"><i style="transform:scaleX(0.629)">C</i></b><b style="width:13px;margin-left:-4.0px;margin-right:-1.0px"><i style="transform:scaleX(0.614)">G</i></b><b style="width:13px;margin-left:-4.0px;margin-right:-1.0px"><i style="transform:scaleX(0.629)">C</i></b><b style="width:13px;margin-left:-4.0px;margin-right:-1.0px"><i style="transform:scaleX(0.707)">T</i></b><b style="width:13px;margin-left:-4.0px;margin-right:-1.0px"><i style="transform:scaleX(0.707)">T</i></b><b style="width:13px;margin-left:-4.0px;margin-right:-1.0px"><i style="transform:scaleX(1.000)">-</i></b><b style="width:13px;margin-left:-4.0px;margin-right:-1.0px"><i style="transform:scaleX(0.614)">G</i></b><b style="width:13px;margin-left:-4.0px;margin-right:-1.0px"><i style="transform:scaleX(0.600)">A</i></b><b style="width:13px;margin-left:-4.0px;margin-right:-1.0px"><i style="transform:scaleX(0.614)">G</i></b><b style="width:13px;margin-left:-4.0px;margin-right:-1.0px"><i style="transform:scaleX(0.629)">C</i></b><b style="width:13px;margin-left:-4.0px;margin-right:-1.0px"><i style="transform:scaleX(0.707)">T</i></b><b style="width:13px;margin-left:-4.0px;margin-right:-1.0px"><i style="transform:scaleX(0.614)">G</i></b><b style="width:13px;margin-left:-4.0px;margin-right:-1.0px"><i style="transform:scaleX(0.614)">G</i></b><b style="width:13px;margin-left:-4.0px;margin-right:-1.0px"><i style="transform:scaleX(0.629)">C</i></b><b style="width:13px;margin-left:-4.0px;margin-right:-1.0px"><i style="transform:scaleX(0.600)">A</i></b><b style="width:13px;margin-left:-4.0px;margin-right:-1.0px"><i style="transform:scaleX(0.707)">T</i></b><b style="width:13px;margin-left:-4.0px;margin-right:-1.0px"><i style="transform:scaleX(0.600)">A</i></b><b style="width:13px;margin-left:-4.0px;margin-right:-1.0px"><i style="transform:scaleX(0.614)">G</i></b><b style="width:13px;margin-left:-4.0px;margin-right:-1.0px"><i style="transform:scaleX(0.707)">T</i></b><b style="width:13px;margin-left:-4.0px;margin-right:-1.0px"><i style="transform:scaleX(0.600)">A</i></b><b style="width:13px;margin-left:-4.0px;margin-right:-1.0px"><i style="transform:scaleX(0.614)">G</i></b><b style="width:13px;margin-left:-4.0px;margin-right:-1.0px"><i style="transform:scaleX(0.614)">G</i></b></div>
<div class="a" style="left:323px;top:275px;width:337px;height:1px;background:#808080"></div>
<div class="a" style="left:460px;top:276px;width:8px;height:18px;background:#20f020"></div>
<div class="a" style="left:484px;top:276px;width:8px;height:18px;background:#88f888"></div>
<div class="a" style="left:500px;top:276px;width:8px;height:18px;background:#88f888"></div>
<div class="a" style="left:508px;top:276px;width:8px;height:18px;background:#88f888"></div>
<div class="a" style="left:612px;top:276px;width:8px;height:18px;background:#88f888"></div>
<div class="a" style="left:324px;top:276px;width:8px;height:18px;background:#a8d4ff"></div>
<div class="a ct" style="left:324px;top:279.13px;font-size:12.6px;line-height:15px;"><b style="width:13px;margin-left:-4.0px;margin-right:-1.0px"><i style="transform:scaleX(0.600)">A</i></b><b style="width:13px;margin-left:-4.0px;margin-right:-1.0px"><i style="transform:scaleX(0.629)">C</i></b><b style="width:13px;margin-left:-4.0px;margin-right:-1.0px"><i style="transform:scaleX(0.629)">C</i></b><b style="width:13px;margin-left:-4.0px;margin-right:-1.0px"><i style="transform:scaleX(0.629)">C</i></b><b style="width:13px;margin-left:-4.0px;margin-right:-1.0px"><i style="transform:scaleX(0.707)">T</i></b><b style="width:13px;margin-left:-4.0px;margin-right:-1.0px"><i style="transform:scaleX(0.600)">A</i></b><b style="width:13px;margin-left:-4.0px;margin-right:-1.0px"><i style="transform:scaleX(0.707)">T</i></b><b style="width:13px;margin-left:-4.0px;margin-right:-1.0px"><i style="transform:scaleX(0.600)">A</i></b><b style="width:13px;margin-left:-4.0px;margin-right:-1.0px"><i style="transform:scaleX(0.629)">C</i></b><b style="width:13px;margin-left:-4.0px;margin-right:-1.0px"><i style="transform:scaleX(0.707)">T</i></b><b style="width:13px;margin-left:-4.0px;margin-right:-1.0px"><i style="transform:scaleX(0.707)">T</i></b><b style="width:13px;margin-left:-4.0px;margin-right:-1.0px"><i style="transform:scaleX(0.600)">A</i></b><b style="width:13px;margin-left:-4.0px;margin-right:-1.0px"><i style="transform:scaleX(0.629)">C</i></b><b style="width:13px;margin-left:-4.0px;margin-right:-1.0px"><i style="transform:scaleX(0.707)">T</i></b><b style="width:13px;margin-left:-4.0px;margin-right:-1.0px"><i style="transform:scaleX(0.600)">A</i></b><b style="width:13px;margin-left:-4.0px;margin-right:-1.0px"><i style="transform:scaleX(0.707)">T</i></b><b style="width:13px;margin-left:-4.0px;margin-right:-1.0px"><i style="transform:scaleX(0.707)">T</i></b><b style="width:13px;margin-left:-4.0px;margin-right:-1.0px;color:#ff0000"><i style="transform:scaleX(0.716)">N</i></b><b style="width:13px;margin-left:-4.0px;margin-right:-1.0px"><i style="transform:scaleX(0.614)">G</i></b><b style="width:13px;margin-left:-4.0px;margin-right:-1.0px"><i style="transform:scaleX(0.614)">G</i></b><b style="width:13px;margin-left:-4.0px;margin-right:-1.0px"><i style="transform:scaleX(0.629)">C</i></b><b style="width:13px;margin-left:-4.0px;margin-right:-1.0px"><i style="transform:scaleX(0.614)">G</i></b><b style="width:13px;margin-left:-4.0px;margin-right:-1.0px"><i style="transform:scaleX(0.629)">C</i></b><b style="width:13px;margin-left:-4.0px;margin-right:-1.0px"><i style="transform:scaleX(0.707)">T</i></b><b style="width:13px;margin-left:-4.0px;margin-right:-1.0px"><i style="transform:scaleX(0.707)">T</i></b><b style="width:13px;margin-left:-4.0px;margin-right:-1.0px"><i style="transform:scaleX(1.000)">-</i></b><b style="width:13px;margin-left:-4.0px;margin-right:-1.0px"><i style="transform:scaleX(0.614)">G</i></b><b style="width:13px;margin-left:-4.0px;margin-right:-1.0px"><i style="transform:scaleX(0.600)">A</i></b><b style="width:13px;margin-left:-4.0px;margin-right:-1.0px"><i style="transform:scaleX(0.614)">G</i></b><b style="width:13px;margin-left:-4.0px;margin-right:-1.0px"><i style="transform:scaleX(0.629)">C</i></b><b style="width:13px;margin-left:-4.0px;margin-right:-1.0px"><i style="transform:scaleX(0.707)">T</i></b><b style="width:13px;margin-left:-4.0px;margin-right:-1.0px"><i style="transform:scaleX(0.614)">G</i></b><b style="width:13px;margin-left:-4.0px;margin-right:-1.0px"><i style="transform:scaleX(0.614)">G</i></b><b style="width:13px;margin-left:-4.0px;margin-right:-1.0px"><i style="transform:scaleX(0.629)">C</i></b><b style="width:13px;margin-left:-4.0px;margin-right:-1.0px"><i style="transform:scaleX(0.600)">A</i></b><b style="width:13px;margin-left:-4.0px;margin-right:-1.0px"><i style="transform:scaleX(0.707)">T</i></b><b style="width:13px;margin-left:-4.0px;margin-right:-1.0px"><i style="transform:scaleX(0.600)">A</i></b><b style="width:13px;margin-left:-4.0px;margin-right:-1.0px"><i style="transform:scaleX(0.614)">G</i></b><b style="width:13px;margin-left:-4.0px;margin-right:-1.0px"><i style="transform:scaleX(0.707)">T</i></b><b style="width:13px;margin-left:-4.0px;margin-right:-1.0px"><i style="transform:scaleX(0.600)">A</i></b><b style="width:13px;margin-left:-4.0px;margin-right:-1.0px"><i style="transform:scaleX(0.614)">G</i></b><b style="width:13px;margin-left:-4.0px;margin-right:-1.0px"><i style="transform:scaleX(0.614)">G</i></b></div>
<div class="a" style="left:323px;top:294px;width:337px;height:1px;background:#808080"></div>
<div class="a" style="left:380px;top:295px;width:8px;height:18px;background:#88f888"></div>
<div class="a" style="left:484px;top:295px;width:8px;height:18px;background:#88f888"></div>
<div class="a" style="left:500px;top:295px;width:8px;height:18px;background:#88f888"></div>
<div class="a" style="left:508px;top:295px;width:8px;height:18px;background:#88f888"></div>
<div class="a" style="left:612px;top:295px;width:8px;height:18px;background:#88f888"></div>
<div class="a" style="left:652px;top:295px;width:8px;height:18px;background:#20f020"></div>
<div class="a" style="left:324px;top:295px;width:8px;height:18px;background:#a8d4ff"></div>
<div class="a ct" style="left:324px;top:298.13px;font-size:12.6px;line-height:15px;"><b style="width:13px;margin-left:-4.0px;margin-right:-1.0px"><i style="transform:scaleX(0.600)">A</i></b><b style="width:13px;margin-left:-4.0px;margin-right:-1.0px"><i style="transform:scaleX(0.629)">C</i></b><b style="width:13px;margin-left:-4.0px;margin-right:-1.0px"><i style="transform:scaleX(0.629)">C</i></b><b style="width:13px;margin-left:-4.0px;margin-right:-1.0px"><i style="transform:scaleX(0.629)">C</i></b><b style="width:13px;margin-left:-4.0px;margin-right:-1.0px"><i style="transform:scaleX(0.707)">T</i></b><b style="width:13px;margin-left:-4.0px;margin-right:-1.0px"><i style="transform:scaleX(0.600)">A</i></b><b style="width:13px;margin-left:-4.0px;margin-right:-1.0px"><i style="transform:scaleX(0.707)">T</i></b><b style="width:13px;margin-left:-4.0px;margin-right:-1.0px"><i style="transform:scaleX(0.600)">A</i></b><b style="width:13px;margin-left:-4.0px;margin-right:-1.0px"><i style="transform:scaleX(0.629)">C</i></b><b style="width:13px;margin-left:-4.0px;margin-right:-1.0px"><i style="transform:scaleX(0.707)">T</i></b><b style="width:13px;margin-left:-4.0px;margin-right:-1.0px"><i style="transform:scaleX(0.707)">T</i></b><b style="width:13px;margin-left:-4.0px;margin-right:-1.0px"><i style="transform:scaleX(0.600)">A</i></b><b style="width:13px;margin-left:-4.0px;margin-right:-1.0px"><i style="transform:scaleX(0.629)">C</i></b><b style="width:13px;margin-left:-4.0px;margin-right:-1.0px"><i style="transform:scaleX(0.707)">T</i></b><b style="width:13px;margin-left:-4.0px;margin-right:-1.0px"><i style="transform:scaleX(0.600)">A</i></b><b style="width:13px;margin-left:-4.0px;margin-right:-1.0px"><i style="transform:scaleX(0.707)">T</i></b><b style="width:13px;margin-left:-4.0px;margin-right:-1.0px"><i style="transform:scaleX(0.707)">T</i></b><b style="width:13px;margin-left:-4.0px;margin-right:-1.0px"><i style="transform:scaleX(0.707)">T</i></b><b style="width:13px;margin-left:-4.0px;margin-right:-1.0px"><i style="transform:scaleX(0.614)">G</i></b><b style="width:13px;margin-left:-4.0px;margin-right:-1.0px"><i style="transform:scaleX(0.614)">G</i></b><b style="width:13px;margin-left:-4.0px;margin-right:-1.0px"><i style="transform:scaleX(0.629)">C</i></b><b style="width:13px;margin-left:-4.0px;margin-right:-1.0px"><i style="transform:scaleX(0.614)">G</i></b><b style="width:13px;margin-left:-4.0px;margin-right:-1.0px"><i style="transform:scaleX(0.629)">C</i></b><b style="width:13px;margin-left:-4.0px;margin-right:-1.0px"><i style="transform:scaleX(0.707)">T</i></b><b style="width:13px;margin-left:-4.0px;margin-right:-1.0px"><i style="transform:scaleX(0.707)">T</i></b><b style="width:13px;margin-left:-4.0px;margin-right:-1.0px"><i style="transform:scaleX(1.000)">-</i></b><b style="width:13px;margin-left:-4.0px;margin-right:-1.0px"><i style="transform:scaleX(0.614)">G</i></b><b style="width:13px;margin-left:-4.0px;margin-right:-1.0px"><i style="transform:scaleX(0.600)">A</i></b><b style="width:13px;margin-left:-4.0px;margin-right:-1.0px"><i style="transform:scaleX(0.614)">G</i></b><b style="width:13px;margin-left:-4.0px;margin-right:-1.0px"><i style="transform:scaleX(0.629)">C</i></b><b style="width:13px;margin-left:-4.0px;margin-right:-1.0px"><i style="transform:scaleX(0.707)">T</i></b><b style="width:13px;margin-left:-4.0px;margin-right:-1.0px"><i style="transform:scaleX(0.614)">G</i></b><b style="width:13px;margin-left:-4.0px;margin-right:-1.0px"><i style="transform:scaleX(0.614)">G</i></b><b style="width:13px;margin-left:-4.0px;margin-right:-1.0px"><i style="transform:scaleX(0.629)">C</i></b><b style="width:13px;margin-left:-4.0px;margin-right:-1.0px"><i style="transform:scaleX(0.600)">A</i></b><b style="width:13px;margin-left:-4.0px;margin-right:-1.0px"><i style="transform:scaleX(0.707)">T</i></b><b style="width:13px;margin-left:-4.0px;margin-right:-1.0px"><i style="transform:scaleX(0.600)">A</i></b><b style="width:13px;margin-left:-4.0px;margin-right:-1.0px"><i style="transform:scaleX(0.614)">G</i></b><b style="width:13px;margin-left:-4.0px;margin-right:-1.0px"><i style="transform:scaleX(0.707)">T</i></b><b style="width:13px;margin-left:-4.0px;margin-right:-1.0px"><i style="transform:scaleX(0.600)">A</i></b><b style="width:13px;margin-left:-4.0px;margin-right:-1.0px"><i style="transform:scaleX(0.614)">G</i></b><b style="width:13px;margin-left:-4.0px;margin-right:-1.0px"><i style="transform:scaleX(0.614)">G</i></b></div>
<div class="a" style="left:323px;top:313px;width:337px;height:1px;background:#808080"></div>
<div class="a" style="left:332px;top:314px;width:8px;height:18px;background:#88f888"></div>
<div class="a" style="left:452px;top:314px;width:8px;height:18px;background:#88f888"></div>
<div class="a" style="left:468px;top:314px;width:8px;height:18px;background:#88f888"></div>
<div class="a" style="left:484px;top:314px;width:8px;height:18px;background:#20f020"></div>
<div class="a" style="left:492px;top:314px;width:8px;height:18px;background:#20f020"></div>
<div class="a" style="left:500px;top:314px;width:8px;height:18px;background:#20f020"></div>
<div class="a" style="left:508px;top:314px;width:8px;height:18px;background:#20f020"></div>
<div class="a" style="left:516px;top:314px;width:8px;height:18px;background:#20f020"></div>
<div class="a" style="left:524px;top:314px;width:8px;height:18px;background:#20f020"></div>
<div class="a" style="left:532px;top:314px;width:8px;height:18px;background:#20f020"></div>
<div class="a" style="left:540px;top:314px;width:8px;height:18px;background:#20f020"></div>
<div class="a" style="left:564px;top:314px;width:8px;height:18px;background:#20f020"></div>
<div class="a" style="left:572px;top:314px;width:8px;height:18px;background:#20f020"></div>
<div class="a" style="left:580px;top:314px;width:8px;height:18px;background:#20f020"></div>
<div class="a" style="left:612px;top:314px;width:8px;height:18px;background:#88f888"></div>
<div class="a" style="left:652px;top:314px;width:8px;height:18px;background:#88f888"></div>
<div class="a" style="left:324px;top:314px;width:8px;height:18px;background:#a8d4ff"></div>
<div class="a ct" style="left:324px;top:317.13px;font-size:12.6px;line-height:15px;"><b style="width:13px;margin-left:-4.0px;margin-right:-1.0px"><i style="transform:scaleX(0.600)">A</i></b><b style="width:13px;margin-left:-4.0px;margin-right:-1.0px"><i style="transform:scaleX(0.629)">C</i></b><b style="width:13px;margin-left:-4.0px;margin-right:-1.0px"><i style="transform:scaleX(0.629)">C</i></b><b style="width:13px;margin-left:-4.0px;margin-right:-1.0px"><i style="transform:scaleX(0.629)">C</i></b><b style="width:13px;margin-left:-4.0px;margin-right:-1.0px"><i style="transform:scaleX(0.707)">T</i></b><b style="width:13px;margin-left:-4.0px;margin-right:-1.0px"><i style="transform:scaleX(0.600)">A</i></b><b style="width:13px;margin-left:-4.0px;margin-right:-1.0px"><i style="transform:scaleX(0.707)">T</i></b><b style="width:13px;margin-left:-4.0px;margin-right:-1.0px"><i style="transform:scaleX(0.600)">A</i></b><b style="width:13px;margin-left:-4.0px;margin-right:-1.0px"><i style="transform:scaleX(0.629)">C</i></b><b style="width:13px;margin-left:-4.0px;margin-right:-1.0px"><i style="transform:scaleX(0.707)">T</i></b><b style="width:13px;margin-left:-4.0px;margin-right:-1.0px"><i style="transform:scaleX(0.707)">T</i></b><b style="width:13px;margin-left:-4.0px;margin-right:-1.0px"><i style="transform:scaleX(0.600)">A</i></b><b style="width:13px;margin-left:-4.0px;margin-right:-1.0px"><i style="transform:scaleX(0.629)">C</i></b><b style="width:13px;margin-left:-4.0px;margin-right:-1.0px"><i style="transform:scaleX(0.707)">T</i></b><b style="width:13px;margin-left:-4.0px;margin-right:-1.0px"><i style="transform:scaleX(0.600)">A</i></b><b style="width:13px;margin-left:-4.0px;margin-right:-1.0px"><i style="transform:scaleX(0.707)">T</i></b><b style="width:13px;margin-left:-4.0px;margin-right:-1.0px"><i style="transform:scaleX(0.707)">T</i></b><b style="width:13px;margin-left:-4.0px;margin-right:-1.0px"><i style="transform:scaleX(0.707)">T</i></b><b style="width:13px;margin-left:-4.0px;margin-right:-1.0px"><i style="transform:scaleX(0.614)">G</i></b><b style="width:13px;margin-left:-4.0px;margin-right:-1.0px"><i style="transform:scaleX(0.614)">G</i></b><b style="width:13px;margin-left:-4.0px;margin-right:-1.0px;color:#ff0000"><i style="transform:scaleX(0.716)">N</i></b><b style="width:13px;margin-left:-4.0px;margin-right:-1.0px;color:#ff0000"><i style="transform:scaleX(0.716)">N</i></b><b style="width:13px;margin-left:-4.0px;margin-right:-1.0px;color:#ff0000"><i style="transform:scaleX(0.716)">N</i></b><b style="width:13px;margin-left:-4.0px;margin-right:-1.0px;color:#ff0000"><i style="transform:scaleX(0.716)">N</i></b><b style="width:13px;margin-left:-4.0px;margin-right:-1.0px;color:#ff0000"><i style="transform:scaleX(1.000)">-</i></b><b style="width:13px;margin-left:-4.0px;margin-right:-1.0px"><i style="transform:scaleX(1.000)">-</i></b><b style="width:13px;margin-left:-4.0px;margin-right:-1.0px;color:#ff0000"><i style="transform:scaleX(0.716)">N</i></b><b style="width:13px;margin-left:-4.0px;margin-right:-1.0px;color:#ff0000"><i style="transform:scaleX(0.716)">N</i></b><b style="width:13px;margin-left:-4.0px;margin-right:-1.0px"><i style="transform:scaleX(0.614)">G</i></b><b style="width:13px;margin-left:-4.0px;margin-right:-1.0px"><i style="transform:scaleX(0.629)">C</i></b><b style="width:13px;margin-left:-4.0px;margin-right:-1.0px;color:#ff0000"><i style="transform:scaleX(0.716)">N</i></b><b style="width:13px;margin-left:-4.0px;margin-right:-1.0px;color:#ff0000"><i style="transform:scaleX(0.716)">N</i></b><b style="width:13px;margin-left:-4.0px;margin-right:-1.0px"><i style="transform:scaleX(0.614)">G</i></b><b style="width:13px;margin-left:-4.0px;margin-right:-1.0px"><i style="transform:scaleX(0.629)">C</i></b><b style="width:13px;margin-left:-4.0px;margin-right:-1.0px"><i style="transform:scaleX(0.600)">A</i></b><b style="width:13px;margin-left:-4.0px;margin-right:-1.0px"><i style="transform:scaleX(0.707)">T</i></b><b style="width:13px;margin-left:-4.0px;margin-right:-1.0px"><i style="transform:scaleX(0.600)">A</i></b><b style="width:13px;margin-left:-4.0px;margin-right:-1.0px"><i style="transform:scaleX(0.614)">G</i></b><b style="width:13px;margin-left:-4.0px;margin-right:-1.0px"><i style="transform:scaleX(0.707)">T</i></b><b style="width:13px;margin-left:-4.0px;margin-right:-1.0px"><i style="transform:scaleX(0.600)">A</i></b><b style="width:13px;margin-left:-4.0px;margin-right:-1.0px"><i style="transform:scaleX(0.614)">G</i></b><b style="width:13px;margin-left:-4.0px;margin-right:-1.0px"><i style="transform:scaleX(0.614)">G</i></b></div>
<div class="a" style="left:323px;top:332px;width:337px;height:1px;background:#808080"></div>
<div class="a" style="left:356px;top:333px;width:8px;height:18px;background:#88f888"></div>
<div class="a" style="left:364px;top:333px;width:8px;height:18px;background:#88f888"></div>
<div class="a" style="left:372px;top:333px;width:8px;height:18px;background:#88f888"></div>
<div class="a" style="left:420px;top:333px;width:8px;height:18px;background:#88f888"></div>
<div class="a" style="left:484px;top:333px;width:8px;height:18px;background:#88f888"></div>
<div class="a" style="left:644px;top:333px;width:8px;height:18px;background:#20f020"></div>
<div class="a" style="left:324px;top:333px;width:8px;height:18px;background:#a8d4ff"></div>
<div class="a ct" style="left:324px;top:336.13px;font-size:12.6px;line-height:15px;"><b style="width:13px;margin-left:-4.0px;margin-right:-1.0px"><i style="transform:scaleX(0.600)">A</i></b><b style="width:13px;margin-left:-4.0px;margin-right:-1.0px"><i style="transform:scaleX(0.629)">C</i></b><b style="width:13px;margin-left:-4.0px;margin-right:-1.0px"><i style="transform:scaleX(0.629)">C</i></b><b style="width:13px;margin-left:-4.0px;margin-right:-1.0px"><i style="transform:scaleX(0.629)">C</i></b><b style="width:13px;margin-left:-4.0px;margin-right:-1.0px"><i style="transform:scaleX(0.707)">T</i></b><b style="width:13px;margin-left:-4.0px;margin-right:-1.0px"><i style="transform:scaleX(0.600)">A</i></b><b style="width:13px;margin-left:-4.0px;margin-right:-1.0px"><i style="transform:scaleX(0.707)">T</i></b><b style="width:13px;margin-left:-4.0px;margin-right:-1.0px"><i style="transform:scaleX(0.600)">A</i></b><b style="width:13px;margin-left:-4.0px;margin-right:-1.0px"><i style="transform:scaleX(0.629)">C</i></b><b style="width:13px;margin-left:-4.0px;margin-right:-1.0px"><i style="transform:scaleX(0.707)">T</i></b><b style="width:13px;margin-left:-4.0px;margin-right:-1.0px"><i style="transform:scaleX(0.707)">T</i></b><b style="width:13px;margin-left:-4.0px;margin-right:-1.0px"><i style="transform:scaleX(0.600)">A</i></b><b style="width:13px;margin-left:-4.0px;margin-right:-1.0px"><i style="transform:scaleX(0.629)">C</i></b><b style="width:13px;margin-left:-4.0px;margin-right:-1.0px"><i style="transform:scaleX(0.707)">T</i></b><b style="width:13px;margin-left:-4.0px;margin-right:-1.0px"><i style="transform:scaleX(0.600)">A</i></b><b style="width:13px;margin-left:-4.0px;margin-right:-1.0px"><i style="transform:scaleX(0.707)">T</i></b><b style="width:13px;margin-left:-4.0px;margin-right:-1.0px"><i style="transform:scaleX(0.707)">T</i></b><b style="width:13px;margin-left:-4.0px;margin-right:-1.0px"><i style="transform:scaleX(0.707)">T</i></b><b style="width:13px;margin-left:-4.0px;margin-right:-1.0px"><i style="transform:scaleX(0.614)">G</i></b><b style="width:13px;margin-left:-4.0px;margin-right:-1.0px"><i style="transform:scaleX(0.614)">G</i></b><b style="width:13px;margin-left:-4.0px;margin-right:-1.0px"><i style="transform:scaleX(0.629)">C</i></b><b style="width:13px;margin-left:-4.0px;margin-right:-1.0px"><i style="transform:scaleX(0.614)">G</i></b><b style="width:13px;margin-left:-4.0px;margin-right:-1.0px"><i style="transform:scaleX(0.629)">C</i></b><b style="width:13px;margin-left:-4.0px;margin-right:-1.0px"><i style="transform:scaleX(0.707)">T</i></b><b style="width:13px;margin-left:-4.0px;margin-right:-1.0px"><i style="transform:scaleX(0.707)">T</i></b><b style="width:13px;margin-left:-4.0px;margin-right:-1.0px"><i style="transform:scaleX(1.000)">-</i></b><b style="width:13px;margin-left:-4.0px;margin-right:-1.0px"><i style="transform:scaleX(0.614)">G</i></b><b style="width:13px;margin-left:-4.0px;margin-right:-1.0px"><i style="transform:scaleX(0.600)">A</i></b><b style="width:13px;margin-left:-4.0px;margin-right:-1.0px"><i style="transform:scaleX(0.614)">G</i></b><b style="width:13px;margin-left:-4.0px;margin-right:-1.0px"><i style="transform:scaleX(0.629)">C</i></b><b style="width:13px;margin-left:-4.0px;margin-right:-1.0px"><i style="transform:scaleX(0.707)">T</i></b><b style="width:13px;margin-left:-4.0px;margin-right:-1.0px"><i style="transform:scaleX(0.614)">G</i></b><b style="width:13px;margin-left:-4.0px;margin-right:-1.0px"><i style="transform:scaleX(0.614)">G</i></b><b style="width:13px;margin-left:-4.0px;margin-right:-1.0px"><i style="transform:scaleX(0.629)">C</i></b><b style="width:13px;margin-left:-4.0px;margin-right:-1.0px"><i style="transform:scaleX(0.600)">A</i></b><b style="width:13px;margin-left:-4.0px;margin-right:-1.0px"><i style="transform:scaleX(0.707)">T</i></b><b style="width:13px;margin-left:-4.0px;margin-right:-1.0px"><i style="transform:scaleX(0.600)">A</i></b><b style="width:13px;margin-left:-4.0px;margin-right:-1.0px"><i style="transform:scaleX(0.614)">G</i></b><b style="width:13px;margin-left:-4.0px;margin-right:-1.0px"><i style="transform:scaleX(0.707)">T</i></b><b style="width:13px;margin-left:-4.0px;margin-right:-1.0px"><i style="transform:scaleX(0.600)">A</i></b><b style="width:13px;margin-left:-4.0px;margin-right:-1.0px"><i style="transform:scaleX(0.614)">G</i></b><b style="width:13px;margin-left:-4.0px;margin-right:-1.0px"><i style="transform:scaleX(0.614)">G</i></b></div>
<div class="a" style="left:323px;top:351px;width:337px;height:1px;background:#808080"></div>
<div class="a" style="left:388px;top:352px;width:8px;height:18px;background:#88f888"></div>
<div class="a" style="left:508px;top:352px;width:8px;height:18px;background:#20f020"></div>
<div class="a" style="left:556px;top:352px;width:8px;height:18px;background:#88f888"></div>
<div class="a" style="left:564px;top:352px;width:8px;height:18px;background:#88f888"></div>
<div class="a" style="left:652px;top:352px;width:8px;height:18px;background:#88f888"></div>
<div class="a" style="left:324px;top:352px;width:8px;height:18px;background:#a8d4ff"></div>
<div class="a ct" style="left:324px;top:355.13px;font-size:12.6px;line-height:15px;"><b style="width:13px;margin-left:-4.0px;margin-right:-1.0px"><i style="transform:scaleX(0.600)">A</i></b><b style="width:13px;margin-left:-4.0px;margin-right:-1.0px"><i style="transform:scaleX(0.629)">C</i></b><b style="width:13px;margin-left:-4.0px;margin-right:-1.0px"><i style="transform:scaleX(0.629)">C</i></b><b style="width:13px;margin-left:-4.0px;margin-right:-1.0px"><i style="transform:scaleX(0.629)">C</i></b><b style="width:13px;margin-left:-4.0px;margin-right:-1.0px"><i style="transform:scaleX(0.707)">T</i></b><b style="width:13px;margin-left:-4.0px;margin-right:-1.0px"><i style="transform:scaleX(0.600)">A</i></b><b style="width:13px;margin-left:-4.0px;margin-right:-1.0px"><i style="transform:scaleX(0.707)">T</i></b><b style="width:13px;margin-left:-4.0px;margin-right:-1.0px"><i style="transform:scaleX(0.600)">A</i></b><b style="width:13px;margin-left:-4.0px;margin-right:-1.0px"><i style="transform:scaleX(0.629)">C</i></b><b style="width:13px;margin-left:-4.0px;margin-right:-1.0px"><i style="transform:scaleX(0.707)">T</i></b><b style="width:13px;margin-left:-4.0px;margin-right:-1.0px"><i style="transform:scaleX(0.707)">T</i></b><b style="width:13px;margin-left:-4.0px;margin-right:-1.0px"><i style="transform:scaleX(0.600)">A</i></b><b style="width:13px;margin-left:-4.0px;margin-right:-1.0px"><i style="transform:scaleX(0.629)">C</i></b><b style="width:13px;margin-left:-4.0px;margin-right:-1.0px"><i style="transform:scaleX(0.707)">T</i></b><b style="width:13px;margin-left:-4.0px;margin-right:-1.0px"><i style="transform:scaleX(0.600)">A</i></b><b style="width:13px;margin-left:-4.0px;margin-right:-1.0px"><i style="transform:scaleX(0.707)">T</i></b><b style="width:13px;margin-left:-4.0px;margin-right:-1.0px"><i style="transform:scaleX(0.707)">T</i></b><b style="width:13px;margin-left:-4.0px;margin-right:-1.0px"><i style="transform:scaleX(0.707)">T</i></b><b style="width:13px;margin-left:-4.0px;margin-right:-1.0px"><i style="transform:scaleX(0.614)">G</i></b><b style="width:13px;margin-left:-4.0px;margin-right:-1.0px"><i style="transform:scaleX(0.614)">G</i></b><b style="width:13px;margin-left:-4.0px;margin-right:-1.0px"><i style="transform:scaleX(0.629)">C</i></b><b style="width:13px;margin-left:-4.0px;margin-right:-1.0px"><i style="transform:scaleX(0.614)">G</i></b><b style="width:13px;margin-left:-4.0px;margin-right:-1.0px"><i style="transform:scaleX(0.629)">C</i></b><b style="width:13px;margin-left:-4.0px;margin-right:-1.0px;color:#ff0000"><i style="transform:scaleX(0.716)">N</i></b><b style="width:13px;margin-left:-4.0px;margin-right:-1.0px"><i style="transform:scaleX(0.707)">T</i></b><b style="width:13px;margin-left:-4.0px;margin-right:-1.0px"><i style="transform:scaleX(1.000)">-</i></b><b style="width:13px;margin-left:-4.0px;margin-right:-1.0px"><i style="transform:scaleX(0.614)">G</i></b><b style="width:13px;margin-left:-4.0px;margin-right:-1.0px"><i style="transform:scaleX(0.600)">A</i></b><b style="width:13px;margin-left:-4.0px;margin-right:-1.0px"><i style="transform:scaleX(0.614)">G</i></b><b style="width:13px;margin-left:-4.0px;margin-right:-1.0px"><i style="transform:scaleX(0.629)">C</i></b><b style="width:13px;margin-left:-4.0px;margin-right:-1.0px"><i style="transform:scaleX(0.707)">T</i></b><b style="width:13px;margin-left:-4.0px;margin-right:-1.0px"><i style="transform:scaleX(0.614)">G</i></b><b style="width:13px;margin-left:-4.0px;margin-right:-1.0px"><i style="transform:scaleX(0.614)">G</i></b><b style="width:13px;margin-left:-4.0px;margin-right:-1.0px"><i style="transform:scaleX(0.629)">C</i></b><b style="width:13px;margin-left:-4.0px;margin-right:-1.0px"><i style="transform:scaleX(0.600)">A</i></b><b style="width:13px;margin-left:-4.0px;margin-right:-1.0px"><i style="transform:scaleX(0.707)">T</i></b><b style="width:13px;margin-left:-4.0px;margin-right:-1.0px"><i style="transform:scaleX(0.600)">A</i></b><b style="width:13px;margin-left:-4.0px;margin-right:-1.0px"><i style="transform:scaleX(0.614)">G</i></b><b style="width:13px;margin-left:-4.0px;margin-right:-1.0px"><i style="transform:scaleX(0.707)">T</i></b><b style="width:13px;margin-left:-4.0px;margin-right:-1.0px"><i style="transform:scaleX(0.600)">A</i></b><b style="width:13px;margin-left:-4.0px;margin-right:-1.0px"><i style="transform:scaleX(0.614)">G</i></b><b style="width:13px;margin-left:-4.0px;margin-right:-1.0px"><i style="transform:scaleX(0.614)">G</i></b></div>
<div class="a" style="left:323px;top:370px;width:337px;height:1px;background:#808080"></div>
<div class="a" style="left:364px;top:371px;width:8px;height:18px;background:#88f888"></div>
<div class="a" style="left:396px;top:371px;width:8px;height:18px;background:#20f020"></div>
<div class="a" style="left:508px;top:371px;width:8px;height:18px;background:#88f888"></div>
<div class="a" style="left:644px;top:371px;width:8px;height:18px;background:#88f888"></div>
<div class="a" style="left:324px;top:371px;width:8px;height:18px;background:#a8d4ff"></div>
<div class="a ct" style="left:324px;top:374.13px;font-size:12.6px;line-height:15px;"><b style="width:13px;margin-left:-4.0px;margin-right:-1.0px"><i style="transform:scaleX(0.600)">A</i></b><b style="width:13px;margin-left:-4.0px;margin-right:-1.0px"><i style="transform:scaleX(0.629)">C</i></b><b style="width:13px;margin-left:-4.0px;margin-right:-1.0px"><i style="transform:scaleX(0.629)">C</i></b><b style="width:13px;margin-left:-4.0px;margin-right:-1.0px"><i style="transform:scaleX(0.629)">C</i></b><b style="width:13px;margin-left:-4.0px;margin-right:-1.0px"><i style="transform:scaleX(0.707)">T</i></b><b style="width:13px;margin-left:-4.0px;margin-right:-1.0px"><i style="transform:scaleX(0.600)">A</i></b><b style="width:13px;margin-left:-4.0px;margin-right:-1.0px"><i style="transform:scaleX(0.707)">T</i></b><b style="width:13px;margin-left:-4.0px;margin-right:-1.0px"><i style="transform:scaleX(0.600)">A</i></b><b style="width:13px;margin-left:-4.0px;margin-right:-1.0px"><i style="transform:scaleX(0.629)">C</i></b><b style="width:13px;margin-left:-4.0px;margin-right:-1.0px"><i style="transform:scaleX(0.707)">T</i></b><b style="width:13px;margin-left:-4.0px;margin-right:-1.0px"><i style="transform:scaleX(0.707)">T</i></b><b style="width:13px;margin-left:-4.0px;margin-right:-1.0px"><i style="transform:scaleX(0.600)">A</i></b><b style="width:13px;margin-left:-4.0px;margin-right:-1.0px"><i style="transform:scaleX(0.629)">C</i></b><b style="width:13px;margin-left:-4.0px;margin-right:-1.0px"><i style="transform:scaleX(0.707)">T</i></b><b style="width:13px;margin-left:-4.0px;margin-right:-1.0px"><i style="transform:scaleX(0.600)">A</i></b><b style="width:13px;margin-left:-4.0px;margin-right:-1.0px"><i style="transform:scaleX(0.707)">T</i></b><b style="width:13px;margin-left:-4.0px;margin-right:-1.0px"><i style="transform:scaleX(0.707)">T</i></b><b style="width:13px;margin-left:-4.0px;margin-right:-1.0px"><i style="transform:scaleX(0.707)">T</i></b><b style="width:13px;margin-left:-4.0px;margin-right:-1.0px"><i style="transform:scaleX(0.614)">G</i></b><b style="width:13px;margin-left:-4.0px;margin-right:-1.0px"><i style="transform:scaleX(0.614)">G</i></b><b style="width:13px;margin-left:-4.0px;margin-right:-1.0px"><i style="transform:scaleX(0.629)">C</i></b><b style="width:13px;margin-left:-4.0px;margin-right:-1.0px"><i style="transform:scaleX(0.614)">G</i></b><b style="width:13px;margin-left:-4.0px;margin-right:-1.0px"><i style="transform:scaleX(0.629)">C</i></b><b style="width:13px;margin-left:-4.0px;margin-right:-1.0px"><i style="transform:scaleX(0.707)">T</i></b><b style="width:13px;margin-left:-4.0px;margin-right:-1.0px"><i style="transform:scaleX(0.707)">T</i></b><b style="width:13px;margin-left:-4.0px;margin-right:-1.0px"><i style="transform:scaleX(1.000)">-</i></b><b style="width:13px;margin-left:-4.0px;margin-right:-1.0px"><i style="transform:scaleX(0.614)">G</i></b><b style="width:13px;margin-left:-4.0px;margin-right:-1.0px"><i style="transform:scaleX(0.600)">A</i></b><b style="width:13px;margin-left:-4.0px;margin-right:-1.0px"><i style="transform:scaleX(0.614)">G</i></b><b style="width:13px;margin-left:-4.0px;margin-right:-1.0px"><i style="transform:scaleX(0.629)">C</i></b><b style="width:13px;margin-left:-4.0px;margin-right:-1.0px"><i style="transform:scaleX(0.707)">T</i></b><b style="width:13px;margin-left:-4.0px;margin-right:-1.0px"><i style="transform:scaleX(0.614)">G</i></b><b style="width:13px;margin-left:-4.0px;margin-right:-1.0px"><i style="transform:scaleX(0.614)">G</i></b><b style="width:13px;margin-left:-4.0px;margin-right:-1.0px"><i style="transform:scaleX(0.629)">C</i></b><b style="width:13px;margin-left:-4.0px;margin-right:-1.0px"><i style="transform:scaleX(0.600)">A</i></b><b style="width:13px;margin-left:-4.0px;margin-right:-1.0px"><i style="transform:scaleX(0.707)">T</i></b><b style="width:13px;margin-left:-4.0px;margin-right:-1.0px"><i style="transform:scaleX(0.600)">A</i></b><b style="width:13px;margin-left:-4.0px;margin-right:-1.0px"><i style="transform:scaleX(0.614)">G</i></b><b style="width:13px;margin-left:-4.0px;margin-right:-1.0px"><i style="transform:scaleX(0.707)">T</i></b><b style="width:13px;margin-left:-4.0px;margin-right:-1.0px"><i style="transform:scaleX(0.600)">A</i></b><b style="width:13px;margin-left:-4.0px;margin-right:-1.0px"><i style="transform:scaleX(0.614)">G</i></b><b style="width:13px;margin-left:-4.0px;margin-right:-1.0px"><i style="transform:scaleX(0.614)">G</i></b></div>
<div class="a" style="left:323px;top:389px;width:337px;height:1px;background:#808080"></div>
<div class="a" style="left:332px;top:390px;width:8px;height:18px;background:#88f888"></div>
<div class="a" style="left:460px;top:390px;width:8px;height:18px;background:#88f888"></div>
<div class="a" style="left:484px;top:390px;width:8px;height:18px;background:#88f888"></div>
<div class="a" style="left:652px;top:390px;width:8px;height:18px;background:#20f020"></div>
<div class="a" style="left:324px;top:390px;width:8px;height:18px;background:#a8d4ff"></div>
<div class="a ct" style="left:324px;top:393.13px;font-size:12.6px;line-height:15px;"><b style="width:13px;margin-left:-4.0px;margin-right:-1.0px"><i style="transform:scaleX(0.600)">A</i></b><b style="width:13px;margin-left:-4.0px;margin-right:-1.0px"><i style="transform:scaleX(0.629)">C</i></b><b style="width:13px;margin-left:-4.0px;margin-right:-1.0px"><i style="transform:scaleX(0.629)">C</i></b><b style="width:13px;margin-left:-4.0px;margin-right:-1.0px"><i style="transform:scaleX(0.629)">C</i></b><b style="width:13px;margin-left:-4.0px;margin-right:-1.0px"><i style="transform:scaleX(0.707)">T</i></b><b style="width:13px;margin-left:-4.0px;margin-right:-1.0px"><i style="transform:scaleX(0.600)">A</i></b><b style="width:13px;margin-left:-4.0px;margin-right:-1.0px"><i style="transform:scaleX(0.707)">T</i></b><b style="width:13px;margin-left:-4.0px;margin-right:-1.0px"><i style="transform:scaleX(0.600)">A</i></b><b style="width:13px;margin-left:-4.0px;margin-right:-1.0px"><i style="transform:scaleX(0.629)">C</i></b><b style="width:13px;margin-left:-4.0px;margin-right:-1.0px"><i style="transform:scaleX(0.707)">T</i></b><b style="width:13px;margin-left:-4.0px;margin-right:-1.0px"><i style="transform:scaleX(0.707)">T</i></b><b style="width:13px;margin-left:-4.0px;margin-right:-1.0px"><i style="transform:scaleX(0.600)">A</i></b><b style="width:13px;margin-left:-4.0px;margin-right:-1.0px"><i style="transform:scaleX(0.629)">C</i></b><b style="width:13px;margin-left:-4.0px;margin-right:-1.0px"><i style="transform:scaleX(0.707)">T</i></b><b style="width:13px;margin-left:-4.0px;margin-right:-1.0px"><i style="transform:scaleX(0.600)">A</i></b><b style="width:13px;margin-left:-4.0px;margin-right:-1.0px"><i style="transform:scaleX(0.707)">T</i></b><b style="width:13px;margin-left:-4.0px;margin-right:-1.0px"><i style="transform:scaleX(0.707)">T</i></b><b style="width:13px;margin-left:-4.0px;margin-right:-1.0px"><i style="transform:scaleX(0.707)">T</i></b><b style="width:13px;margin-left:-4.0px;margin-right:-1.0px"><i style="transform:scaleX(0.614)">G</i></b><b style="width:13px;margin-left:-4.0px;margin-right:-1.0px"><i style="transform:scaleX(0.614)">G</i></b><b style="width:13px;margin-left:-4.0px;margin-right:-1.0px"><i style="transform:scaleX(0.629)">C</i></b><b style="width:13px;margin-left:-4.0px;margin-right:-1.0px"><i style="transform:scaleX(0.614)">G</i></b><b style="width:13px;margin-left:-4.0px;margin-right:-1.0px"><i style="transform:scaleX(0.629)">C</i></b><b style="width:13px;margin-left:-4.0px;margin-right:-1.0px"><i style="transform:scaleX(0.707)">T</i></b><b style="width:13px;margin-left:-4.0px;margin-right:-1.0px"><i style="transform:scaleX(0.707)">T</i></b><b style="width:13px;margin-left:-4.0px;margin-right:-1.0px"><i style="transform:scaleX(1.000)">-</i></b><b style="width:13px;margin-left:-4.0px;margin-right:-1.0px"><i style="transform:scaleX(0.614)">G</i></b><b style="width:13px;margin-left:-4.0px;margin-right:-1.0px"><i style="transform:scaleX(0.600)">A</i></b><b style="width:13px;margin-left:-4.0px;margin-right:-1.0px"><i style="transform:scaleX(0.614)">G</i></b><b style="width:13px;margin-left:-4.0px;margin-right:-1.0px"><i style="transform:scaleX(0.629)">C</i></b><b style="width:13px;margin-left:-4.0px;margin-right:-1.0px"><i style="transform:scaleX(0.707)">T</i></b><b style="width:13px;margin-left:-4.0px;margin-right:-1.0px"><i style="transform:scaleX(0.614)">G</i></b><b style="width:13px;margin-left:-4.0px;margin-right:-1.0px"><i style="transform:scaleX(0.614)">G</i></b><b style="width:13px;margin-left:-4.0px;margin-right:-1.0px"><i style="transform:scaleX(0.629)">C</i></b><b style="width:13px;margin-left:-4.0px;margin-right:-1.0px"><i style="transform:scaleX(0.600)">A</i></b><b style="width:13px;margin-left:-4.0px;margin-right:-1.0px"><i style="transform:scaleX(0.707)">T</i></b><b style="width:13px;margin-left:-4.0px;margin-right:-1.0px"><i style="transform:scaleX(0.600)">A</i></b><b style="width:13px;margin-left:-4.0px;margin-right:-1.0px"><i style="transform:scaleX(0.614)">G</i></b><b style="width:13px;margin-left:-4.0px;margin-right:-1.0px"><i style="transform:scaleX(0.707)">T</i></b><b style="width:13px;margin-left:-4.0px;margin-right:-1.0px"><i style="transform:scaleX(0.600)">A</i></b><b style="width:13px;margin-left:-4.0px;margin-right:-1.0px"><i style="transform:scaleX(0.614)">G</i></b><b style="width:13px;margin-left:-4.0px;margin-right:-1.0px"><i style="transform:scaleX(0.614)">G</i></b></div>
<div class="a" style="left:323px;top:408px;width:337px;height:1px;background:#808080"></div>
<div class="a" style="left:420px;top:409px;width:8px;height:18px;background:#88f888"></div>
<div class="a" style="left:428px;top:409px;width:8px;height:18px;background:#88f888"></div>
<div class="a" style="left:436px;top:409px;width:8px;height:18px;background:#20f020"></div>
<div class="a" style="left:444px;top:409px;width:8px;height:18px;background:#20f020"></div>
<div class="a" style="left:452px;top:409px;width:8px;height:18px;background:#20f020"></div>
<div class="a" style="left:468px;top:409px;width:8px;height:18px;background:#88f888"></div>
<div class="a" style="left:556px;top:409px;width:8px;height:18px;background:#88f888"></div>
<div class="a" style="left:324px;top:409px;width:8px;height:18px;background:#a8d4ff"></div>
<div class="a ct" style="left:324px;top:412.13px;font-size:12.6px;line-height:15px;"><b style="width:13px;margin-left:-4.0px;margin-right:-1.0px"><i style="transform:scaleX(0.600)">A</i></b><b style="width:13px;margin-left:-4.0px;margin-right:-1.0px"><i style="transform:scaleX(0.629)">C</i></b><b style="width:13px;margin-left:-4.0px;margin-right:-1.0px"><i style="transform:scaleX(0.629)">C</i></b><b style="width:13px;margin-left:-4.0px;margin-right:-1.0px"><i style="transform:scaleX(0.629)">C</i></b><b style="width:13px;margin-left:-4.0px;margin-right:-1.0px"><i style="transform:scaleX(0.707)">T</i></b><b style="width:13px;margin-left:-4.0px;margin-right:-1.0px"><i style="transform:scaleX(0.600)">A</i></b><b style="width:13px;margin-left:-4.0px;margin-right:-1.0px"><i style="transform:scaleX(0.707)">T</i></b><b style="width:13px;margin-left:-4.0px;margin-right:-1.0px"><i style="transform:scaleX(0.600)">A</i></b><b style="width:13px;margin-left:-4.0px;margin-right:-1.0px"><i style="transform:scaleX(0.629)">C</i></b><b style="width:13px;margin-left:-4.0px;margin-right:-1.0px"><i style="transform:scaleX(0.707)">T</i></b><b style="width:13px;margin-left:-4.0px;margin-right:-1.0px"><i style="transform:scaleX(0.707)">T</i></b><b style="width:13px;margin-left:-4.0px;margin-right:-1.0px"><i style="transform:scaleX(0.600)">A</i></b><b style="width:13px;margin-left:-4.0px;margin-right:-1.0px"><i style="transform:scaleX(0.629)">C</i></b><b style="width:13px;margin-left:-4.0px;margin-right:-1.0px"><i style="transform:scaleX(0.707)">T</i></b><b style="width:13px;margin-left:-4.0px;margin-right:-1.0px"><i style="transform:scaleX(0.600)">A</i></b><b style="width:13px;margin-left:-4.0px;margin-right:-1.0px"><i style="transform:scaleX(0.707)">T</i></b><b style="width:13px;margin-left:-4.0px;margin-right:-1.0px"><i style="transform:scaleX(0.707)">T</i></b><b style="width:13px;margin-left:-4.0px;margin-right:-1.0px"><i style="transform:scaleX(0.707)">T</i></b><b style="width:13px;margin-left:-4.0px;margin-right:-1.0px"><i style="transform:scaleX(0.614)">G</i></b><b style="width:13px;margin-left:-4.0px;margin-right:-1.0px"><i style="transform:scaleX(0.614)">G</i></b><b style="width:13px;margin-left:-4.0px;margin-right:-1.0px"><i style="transform:scaleX(0.629)">C</i></b><b style="width:13px;margin-left:-4.0px;margin-right:-1.0px"><i style="transform:scaleX(0.614)">G</i></b><b style="width:13px;margin-left:-4.0px;margin-right:-1.0px"><i style="transform:scaleX(0.629)">C</i></b><b style="width:13px;margin-left:-4.0px;margin-right:-1.0px"><i style="transform:scaleX(0.707)">T</i></b><b style="width:13px;margin-left:-4.0px;margin-right:-1.0px"><i style="transform:scaleX(0.707)">T</i></b><b style="width:13px;margin-left:-4.0px;margin-right:-1.0px"><i style="transform:scaleX(1.000)">-</i></b><b style="width:13px;margin-left:-4.0px;margin-right:-1.0px"><i style="transform:scaleX(0.614)">G</i></b><b style="width:13px;margin-left:-4.0px;margin-right:-1.0px"><i style="transform:scaleX(0.600)">A</i></b><b style="width:13px;margin-left:-4.0px;margin-right:-1.0px"><i style="transform:scaleX(0.614)">G</i></b><b style="width:13px;margin-left:-4.0px;margin-right:-1.0px"><i style="transform:scaleX(0.629)">C</i></b><b style="width:13px;margin-left:-4.0px;margin-right:-1.0px"><i style="transform:scaleX(0.707)">T</i></b><b style="width:13px;margin-left:-4.0px;margin-right:-1.0px"><i style="transform:scaleX(0.614)">G</i></b><b style="width:13px;margin-left:-4.0px;margin-right:-1.0px"><i style="transform:scaleX(0.614)">G</i></b><b style="width:13px;margin-left:-4.0px;margin-right:-1.0px"><i style="transform:scaleX(0.629)">C</i></b><b style="width:13px;margin-left:-4.0px;margin-right:-1.0px"><i style="transform:scaleX(0.600)">A</i></b><b style="width:13px;margin-left:-4.0px;margin-right:-1.0px"><i style="transform:scaleX(0.707)">T</i></b><b style="width:13px;margin-left:-4.0px;margin-right:-1.0px"><i style="transform:scaleX(0.600)">A</i></b><b style="width:13px;margin-left:-4.0px;margin-right:-1.0px"><i style="transform:scaleX(0.614)">G</i></b><b style="width:13px;margin-left:-4.0px;margin-right:-1.0px"><i style="transform:scaleX(0.707)">T</i></b><b style="width:13px;margin-left:-4.0px;margin-right:-1.0px"><i style="transform:scaleX(0.600)">A</i></b><b style="width:13px;margin-left:-4.0px;margin-right:-1.0px"><i style="transform:scaleX(0.614)">G</i></b><b style="width:13px;margin-left:-4.0px;margin-right:-1.0px"><i style="transform:scaleX(0.614)">G</i></b></div>
<div class="a" style="left:323px;top:427px;width:337px;height:1px;background:#808080"></div>
<div class="a" style="left:484px;top:428px;width:8px;height:18px;background:#88f888"></div>
<div class="a" style="left:324px;top:428px;width:8px;height:18px;background:#a8d4ff"></div>
<div class="a ct" style="left:324px;top:431.13px;font-size:12.6px;line-height:15px;"><b style="width:13px;margin-left:-4.0px;margin-right:-1.0px"><i style="transform:scaleX(0.600)">A</i></b><b style="width:13px;margin-left:-4.0px;margin-right:-1.0px"><i style="transform:scaleX(0.629)">C</i></b><b style="width:13px;margin-left:-4.0px;margin-right:-1.0px"><i style="transform:scaleX(0.629)">C</i></b><b style="width:13px;margin-left:-4.0px;margin-right:-1.0px"><i style="transform:scaleX(0.629)">C</i></b><b style="width:13px;margin-left:-4.0px;margin-right:-1.0px"><i style="transform:scaleX(0.707)">T</i></b><b style="width:13px;margin-left:-4.0px;margin-right:-1.0px"><i style="transform:scaleX(0.600)">A</i></b><b style="width:13px;margin-left:-4.0px;margin-right:-1.0px"><i style="transform:scaleX(0.707)">T</i></b><b style="width:13px;margin-left:-4.0px;margin-right:-1.0px"><i style="transform:scaleX(0.600)">A</i></b><b style="width:13px;margin-left:-4.0px;margin-right:-1.0px"><i style="transform:scaleX(0.629)">C</i></b><b style="width:13px;margin-left:-4.0px;margin-right:-1.0px"><i style="transform:scaleX(0.707)">T</i></b><b style="width:13px;margin-left:-4.0px;margin-right:-1.0px"><i style="transform:scaleX(0.707)">T</i></b><b style="width:13px;margin-left:-4.0px;margin-right:-1.0px"><i style="transform:scaleX(0.600)">A</i></b><b style="width:13px;margin-left:-4.0px;margin-right:-1.0px"><i style="transform:scaleX(0.629)">C</i></b><b style="width:13px;margin-left:-4.0px;margin-right:-1.0px"><i style="transform:scaleX(0.707)">T</i></b><b style="width:13px;margin-left:-4.0px;margin-right:-1.0px"><i style="transform:scaleX(0.600)">A</i></b><b style="width:13px;margin-left:-4.0px;margin-right:-1.0px"><i style="transform:scaleX(0.707)">T</i></b><b style="width:13px;margin-left:-4.0px;margin-right:-1.0px"><i style="transform:scaleX(0.707)">T</i></b><b style="width:13px;margin-left:-4.0px;margin-right:-1.0px"><i style="transform:scaleX(0.707)">T</i></b><b style="width:13px;margin-left:-4.0px;margin-right:-1.0px"><i style="transform:scaleX(0.614)">G</i></b><b style="width:13px;margin-left:-4.0px;margin-right:-1.0px"><i style="transform:scaleX(0.614)">G</i></b><b style="width:13px;margin-left:-4.0px;margin-right:-1.0px"><i style="transform:scaleX(0.629)">C</i></b><b style="width:13px;margin-left:-4.0px;margin-right:-1.0px"><i style="transform:scaleX(0.614)">G</i></b><b style="width:13px;margin-left:-4.0px;margin-right:-1.0px"><i style="transform:scaleX(0.629)">C</i></b><b style="width:13px;margin-left:-4.0px;margin-right:-1.0px"><i style="transform:scaleX(0.707)">T</i></b><b style="width:13px;margin-left:-4.0px;margin-right:-1.0px"><i style="transform:scaleX(0.707)">T</i></b><b style="width:13px;margin-left:-4.0px;margin-right:-1.0px"><i style="transform:scaleX(1.000)">-</i></b><b style="width:13px;margin-left:-4.0px;margin-right:-1.0px"><i style="transform:scaleX(0.614)">G</i></b><b style="width:13px;margin-left:-4.0px;margin-right:-1.0px"><i style="transform:scaleX(0.600)">A</i></b><b style="width:13px;margin-left:-4.0px;margin-right:-1.0px"><i style="transform:scaleX(0.614)">G</i></b><b style="width:13px;margin-left:-4.0px;margin-right:-1.0px"><i style="transform:scaleX(0.629)">C</i></b><b style="width:13px;margin-left:-4.0px;margin-right:-1.0px"><i style="transform:scaleX(0.707)">T</i></b><b style="width:13px;margin-left:-4.0px;margin-right:-1.0px"><i style="transform:scaleX(0.614)">G</i></b><b style="width:13px;margin-left:-4.0px;margin-right:-1.0px"><i style="transform:scaleX(0.614)">G</i></b><b style="width:13px;margin-left:-4.0px;margin-right:-1.0px"><i style="transform:scaleX(0.629)">C</i></b><b style="width:13px;margin-left:-4.0px;margin-right:-1.0px"><i style="transform:scaleX(0.600)">A</i></b><b style="width:13px;margin-left:-4.0px;margin-right:-1.0px"><i style="transform:scaleX(0.707)">T</i></b><b style="width:13px;margin-left:-4.0px;margin-right:-1.0px"><i style="transform:scaleX(0.600)">A</i></b><b style="width:13px;margin-left:-4.0px;margin-right:-1.0px"><i style="transform:scaleX(0.614)">G</i></b><b style="width:13px;margin-left:-4.0px;margin-right:-1.0px"><i style="transform:scaleX(0.707)">T</i></b><b style="width:13px;margin-left:-4.0px;margin-right:-1.0px"><i style="transform:scaleX(0.600)">A</i></b><b style="width:13px;margin-left:-4.0px;margin-right:-1.0px"><i style="transform:scaleX(0.614)">G</i></b><b style="width:13px;margin-left:-4.0px;margin-right:-1.0px"><i style="transform:scaleX(0.614)">G</i></b></div>
<div class="a" style="left:323px;top:446px;width:337px;height:1px;background:#808080"></div>
<div class="a" style="left:332px;top:447px;width:8px;height:18px;background:#88f888"></div>
<div class="a" style="left:500px;top:447px;width:8px;height:18px;background:#88f888"></div>
<div class="a" style="left:508px;top:447px;width:8px;height:18px;background:#88f888"></div>
<div class="a" style="left:324px;top:447px;width:8px;height:18px;background:#a8d4ff"></div>
<div class="a ct" style="left:324px;top:450.13px;font-size:12.6px;line-height:15px;"><b style="width:13px;margin-left:-4.0px;margin-right:-1.0px"><i style="transform:scaleX(0.600)">A</i></b><b style="width:13px;margin-left:-4.0px;margin-right:-1.0px"><i style="transform:scaleX(0.629)">C</i></b><b style="width:13px;margin-left:-4.0px;margin-right:-1.0px"><i style="transform:scaleX(0.629)">C</i></b><b style="width:13px;margin-left:-4.0px;margin-right:-1.0px"><i style="transform:scaleX(0.629)">C</i></b><b style="width:13px;margin-left:-4.0px;margin-right:-1.0px"><i style="transform:scaleX(0.707)">T</i></b><b style="width:13px;margin-left:-4.0px;margin-right:-1.0px"><i style="transform:scaleX(0.600)">A</i></b><b style="width:13px;margin-left:-4.0px;margin-right:-1.0px"><i style="transform:scaleX(0.707)">T</i></b><b style="width:13px;margin-left:-4.0px;margin-right:-1.0px"><i style="transform:scaleX(0.600)">A</i></b><b style="width:13px;margin-left:-4.0px;margin-right:-1.0px"><i style="transform:scaleX(0.629)">C</i></b><b style="width:13px;margin-left:-4.0px;margin-right:-1.0px"><i style="transform:scaleX(0.707)">T</i></b><b style="width:13px;margin-left:-4.0px;margin-right:-1.0px"><i style="transform:scaleX(0.707)">T</i></b><b style="width:13px;margin-left:-4.0px;margin-right:-1.0px"><i style="transform:scaleX(0.600)">A</i></b><b style="width:13px;margin-left:-4.0px;margin-right:-1.0px"><i style="transform:scaleX(0.629)">C</i></b><b style="width:13px;margin-left:-4.0px;margin-right:-1.0px"><i style="transform:scaleX(0.707)">T</i></b><b style="width:13px;margin-left:-4.0px;margin-right:-1.0px"><i style="transform:scaleX(0.600)">A</i></b><b style="width:13px;margin-left:-4.0px;margin-right:-1.0px"><i style="transform:scaleX(0.707)">T</i></b><b style="width:13px;margin-left:-4.0px;margin-right:-1.0px"><i style="transform:scaleX(0.707)">T</i></b><b style="width:13px;margin-left:-4.0px;margin-right:-1.0px"><i style="transform:scaleX(0.707)">T</i></b><b style="width:13px;margin-left:-4.0px;margin-right:-1.0px"><i style="transform:scaleX(0.614)">G</i></b><b style="width:13px;margin-left:-4.0px;margin-right:-1.0px"><i style="transform:scaleX(0.614)">G</i></b><b style="width:13px;margin-left:-4.0px;margin-right:-1.0px"><i style="transform:scaleX(0.629)">C</i></b><b style="width:13px;margin-left:-4.0px;margin-right:-1.0px"><i style="transform:scaleX(0.614)">G</i></b><b style="width:13px;margin-left:-4.0px;margin-right:-1.0px"><i style="transform:scaleX(0.629)">C</i></b><b style="width:13px;margin-left:-4.0px;margin-right:-1.0px"><i style="transform:scaleX(0.707)">T</i></b><b style="width:13px;margin-left:-4.0px;margin-right:-1.0px"><i style="transform:scaleX(0.707)">T</i></b><b style="width:13px;margin-left:-4.0px;margin-right:-1.0px"><i style="transform:scaleX(1.000)">-</i></b><b style="width:13px;margin-left:-4.0px;margin-right:-1.0px"><i style="transform:scaleX(0.614)">G</i></b><b style="width:13px;margin-left:-4.0px;margin-right:-1.0px"><i style="transform:scaleX(0.600)">A</i></b><b style="width:13px;margin-left:-4.0px;margin-right:-1.0px"><i style="transform:scaleX(0.614)">G</i></b><b style="width:13px;margin-left:-4.0px;margin-right:-1.0px"><i style="transform:scaleX(0.629)">C</i></b><b style="width:13px;margin-left:-4.0px;margin-right:-1.0px"><i style="transform:scaleX(0.707)">T</i></b><b style="width:13px;margin-left:-4.0px;margin-right:-1.0px"><i style="transform:scaleX(0.614)">G</i></b><b style="width:13px;margin-left:-4.0px;margin-right:-1.0px"><i style="transform:scaleX(0.614)">G</i></b><b style="width:13px;margin-left:-4.0px;margin-right:-1.0px"><i style="transform:scaleX(0.629)">C</i></b><b style="width:13px;margin-left:-4.0px;margin-right:-1.0px"><i style="transform:scaleX(0.600)">A</i></b><b style="width:13px;margin-left:-4.0px;margin-right:-1.0px"><i style="transform:scaleX(0.707)">T</i></b><b style="width:13px;margin-left:-4.0px;margin-right:-1.0px"><i style="transform:scaleX(0.600)">A</i></b><b style="width:13px;margin-left:-4.0px;margin-right:-1.0px"><i style="transform:scaleX(0.614)">G</i></b><b style="width:13px;margin-left:-4.0px;margin-right:-1.0px"><i style="transform:scaleX(0.707)">T</i></b><b style="width:13px;margin-left:-4.0px;margin-right:-1.0px"><i style="transform:scaleX(0.600)">A</i></b><b style="width:13px;margin-left:-4.0px;margin-right:-1.0px"><i style="transform:scaleX(0.614)">G</i></b><b style="width:13px;margin-left:-4.0px;margin-right:-1.0px"><i style="transform:scaleX(0.614)">G</i></b></div>
<div class="a" style="left:323px;top:465px;width:337px;height:1px;background:#808080"></div>
<div class="a" style="left:323px;top:484px;width:337px;height:1px;background:#808080"></div>
<div class="a" style="left:323px;top:499px;width:337px;height:2px;background:#808080"></div>
<div class="a" style="left:324px;top:501px;width:8px;height:18px;background:#a8d4ff"></div>
<div class="a ct" style="left:324px;top:504.13px;font-size:12.6px;line-height:15px;"><b style="width:13px;margin-left:-4.0px;margin-right:-1.0px"><i style="transform:scaleX(0.600)">A</i></b><b style="width:13px;margin-left:-4.0px;margin-right:-1.0px"><i style="transform:scaleX(0.629)">C</i></b><b style="width:13px;margin-left:-4.0px;margin-right:-1.0px"><i style="transform:scaleX(0.629)">C</i></b><b style="width:13px;margin-left:-4.0px;margin-right:-1.0px"><i style="transform:scaleX(0.629)">C</i></b><b style="width:13px;margin-left:-4.0px;margin-right:-1.0px"><i style="transform:scaleX(0.707)">T</i></b><b style="width:13px;margin-left:-4.0px;margin-right:-1.0px"><i style="transform:scaleX(0.600)">A</i></b><b style="width:13px;margin-left:-4.0px;margin-right:-1.0px"><i style="transform:scaleX(0.707)">T</i></b><b style="width:13px;margin-left:-4.0px;margin-right:-1.0px"><i style="transform:scaleX(0.600)">A</i></b><b style="width:13px;margin-left:-4.0px;margin-right:-1.0px"><i style="transform:scaleX(0.629)">C</i></b><b style="width:13px;margin-left:-4.0px;margin-right:-1.0px"><i style="transform:scaleX(0.707)">T</i></b><b style="width:13px;margin-left:-4.0px;margin-right:-1.0px"><i style="transform:scaleX(0.707)">T</i></b><b style="width:13px;margin-left:-4.0px;margin-right:-1.0px"><i style="transform:scaleX(0.600)">A</i></b><b style="width:13px;margin-left:-4.0px;margin-right:-1.0px"><i style="transform:scaleX(0.629)">C</i></b><b style="width:13px;margin-left:-4.0px;margin-right:-1.0px"><i style="transform:scaleX(0.707)">T</i></b><b style="width:13px;margin-left:-4.0px;margin-right:-1.0px"><i style="transform:scaleX(0.600)">A</i></b><b style="width:13px;margin-left:-4.0px;margin-right:-1.0px"><i style="transform:scaleX(0.707)">T</i></b><b style="width:13px;margin-left:-4.0px;margin-right:-1.0px"><i style="transform:scaleX(0.707)">T</i></b><b style="width:13px;margin-left:-4.0px;margin-right:-1.0px;color:#ff0000"><i style="transform:scaleX(0.707)">T</i></b><b style="width:13px;margin-left:-4.0px;margin-right:-1.0px"><i style="transform:scaleX(0.614)">G</i></b><b style="width:13px;margin-left:-4.0px;margin-right:-1.0px"><i style="transform:scaleX(0.614)">G</i></b><b style="width:13px;margin-left:-4.0px;margin-right:-1.0px;color:#ff0000"><i style="transform:scaleX(0.629)">C</i></b><b style="width:13px;margin-left:-4.0px;margin-right:-1.0px;color:#ff0000"><i style="transform:scaleX(0.614)">G</i></b><b style="width:13px;margin-left:-4.0px;margin-right:-1.0px;color:#ff0000"><i style="transform:scaleX(0.629)">C</i></b><b style="width:13px;margin-left:-4.0px;margin-right:-1.0px;color:#ff0000"><i style="transform:scaleX(0.707)">T</i></b><b style="width:13px;margin-left:-4.0px;margin-right:-1.0px;color:#ff0000"><i style="transform:scaleX(0.707)">T</i></b><b style="width:13px;margin-left:-4.0px;margin-right:-1.0px"><i style="transform:scaleX(1.000)">-</i></b><b style="width:13px;margin-left:-4.0px;margin-right:-1.0px;color:#ff0000"><i style="transform:scaleX(0.614)">G</i></b><b style="width:13px;margin-left:-4.0px;margin-right:-1.0px;color:#ff0000"><i style="transform:scaleX(0.600)">A</i></b><b style="width:13px;margin-left:-4.0px;margin-right:-1.0px"><i style="transform:scaleX(0.614)">G</i></b><b style="width:13px;margin-left:-4.0px;margin-right:-1.0px"><i style="transform:scaleX(0.629)">C</i></b><b style="width:13px;margin-left:-4.0px;margin-right:-1.0px;color:#ff0000"><i style="transform:scaleX(0.707)">T</i></b><b style="width:13px;margin-left:-4.0px;margin-right:-1.0px;color:#ff0000"><i style="transform:scaleX(0.614)">G</i></b><b style="width:13px;margin-left:-4.0px;margin-right:-1.0px"><i style="transform:scaleX(0.614)">G</i></b><b style="width:13px;margin-left:-4.0px;margin-right:-1.0px"><i style="transform:scaleX(0.629)">C</i></b><b style="width:13px;margin-left:-4.0px;margin-right:-1.0px"><i style="transform:scaleX(0.600)">A</i></b><b style="width:13px;margin-left:-4.0px;margin-right:-1.0px"><i style="transform:scaleX(0.707)">T</i></b><b style="width:13px;margin-left:-4.0px;margin-right:-1.0px"><i style="transform:scaleX(0.600)">A</i></b><b style="width:13px;margin-left:-4.0px;margin-right:-1.0px"><i style="transform:scaleX(0.614)">G</i></b><b style="width:13px;margin-left:-4.0px;margin-right:-1.0px"><i style="transform:scaleX(0.707)">T</i></b><b style="width:13px;margin-left:-4.0px;margin-right:-1.0px"><i style="transform:scaleX(0.600)">A</i></b><b style="width:13px;margin-left:-4.0px;margin-right:-1.0px"><i style="transform:scaleX(0.614)">G</i></b><b style="width:13px;margin-left:-4.0px;margin-right:-1.0px"><i style="transform:scaleX(0.614)">G</i></b></div>
<div class="a" style="left:323px;top:519px;width:337px;height:1px;background:#808080"></div>
<div class="a" style="left:322px;top:537px;width:339px;height:1px;background:#808080"></div>
<div class="a" style="left:323px;top:256px;width:1px;height:282px;background:#0000ff"></div>
<div class="a" style="left:326px;top:520px;width:2px;height:17px;background:#000"></div>
<div class="a ct" style="left:329.6px;top:523.13px;font-size:12.6px;line-height:15px;"><b style="width:13px;margin-left:-4.0px;margin-right:-3.0px"><i style="transform:scaleX(0.645)">1</i></b></div>
<div class="a" style="left:398px;top:520px;width:2px;height:17px;background:#000"></div>
<div class="a ct" style="left:401.6px;top:523.13px;font-size:12.6px;line-height:15px;"><b style="width:13px;margin-left:-4.0px;margin-right:-3.0px"><i style="transform:scaleX(0.645)">1</i></b><b style="width:13px;margin-left:-4.0px;margin-right:-3.0px"><i style="transform:scaleX(0.716)">0</i></b></div>
<div class="a" style="left:478px;top:520px;width:2px;height:17px;background:#000"></div>
<div class="a ct" style="left:481.6px;top:523.13px;font-size:12.6px;line-height:15px;"><b style="width:13px;margin-left:-4.0px;margin-right:-3.0px"><i style="transform:scaleX(0.752)">2</i></b><b style="width:13px;margin-left:-4.0px;margin-right:-3.0px"><i style="transform:scaleX(0.716)">0</i></b></div>
<div class="a" style="left:558px;top:520px;width:2px;height:17px;background:#000"></div>
<div class="a ct" style="left:561.6px;top:523.13px;font-size:12.6px;line-height:15px;"><b style="width:13px;margin-left:-4.0px;margin-right:-3.0px"><i style="transform:scaleX(0.716)">3</i></b><b style="width:13px;margin-left:-4.0px;margin-right:-3.0px"><i style="transform:scaleX(0.716)">0</i></b></div>
<div class="a" style="left:638px;top:520px;width:2px;height:17px;background:#000"></div>
<div class="a ct" style="left:641.6px;top:523.13px;font-size:12.6px;line-height:15px;"><b style="width:13px;margin-left:-4.0px;margin-right:-3.0px"><i style="transform:scaleX(0.683)">4</i></b><b style="width:13px;margin-left:-4.0px;margin-right:-3.0px"><i style="transform:scaleX(0.716)">0</i></b></div>
<div class="a" style="left:322px;top:538px;width:36px;height:17px;background:#f0f0f0;border-left:1px solid #808080;border-right:1px solid #d8d8d8"></div>
<div class="a ct" style="left:325.5px;top:536.86px;font-size:10.5px;line-height:15px;"><b style="width:13px;margin-left:-4.25px;margin-right:-3.25px"><i style="transform:scaleX(0.774)">1</i></b><b style="width:13px;margin-left:-4.25px;margin-right:-3.25px"><i style="transform:scaleX(0.721)">0</i></b><b style="width:13px;margin-left:-4.25px;margin-right:-3.25px"><i style="transform:scaleX(0.721)">0</i></b><b style="width:13px;margin-left:-4.25px;margin-right:-3.25px"><i style="transform:scaleX(0.491)">%</i></b></div>
<svg class="a" style="left:349px;top:539px" width="8" height="14"><path d="M1 5 L4 1 L7 5 Z M1 9 L4 13 L7 9 Z" fill="#555"/></svg>
<svg class="a" style="left:360px;top:540px" width="12" height="14"><path d="M8.5 3.5 L5 7 L8.5 10.5" stroke="#555" stroke-width="2.2" fill="none"/></svg>
<div class="a" style="left:375px;top:540px;width:20px;height:14px;background:#cdcdcd"></div>
<svg class="a" style="left:646px;top:540px" width="14" height="14"><path d="M5 3 L8.5 6.5 L5 10" stroke="#555" stroke-width="2.2" fill="none"/></svg>
<svg class="a" style="left:662px;top:256px" width="16" height="290"><path d="M4.5 12 L8 8.5 L11.5 12" stroke="#555" stroke-width="2.2" fill="none"/><path d="M4.5 272 L8 275.5 L11.5 272" stroke="#555" stroke-width="2.2" fill="none"/></svg>
<svg class="a" style="left:0;top:0" width="688" height="50"><rect x="49" y="28" width="1" height="17" fill="#a0a0a0"/><rect x="130" y="28" width="1" height="17" fill="#a0a0a0"/><rect x="297" y="28" width="1" height="17" fill="#a0a0a0"/><rect x="466" y="28" width="1" height="17" fill="#a0a0a0"/><rect x="551" y="28" width="1" height="17" fill="#a0a0a0"/><rect x="573" y="28" width="1" height="17" fill="#a0a0a0"/><rect x="677" y="28" width="1" height="17" fill="#a0a0a0"/><rect x="10" y="29" width="14" height="14" fill="#000"/><rect x="11" y="30" width="2" height="12" fill="#808000"/><rect x="21" y="30" width="2" height="12" fill="#808000"/><rect x="13" y="30" width="8" height="6" fill="#fff"/><rect x="13" y="36" width="8" height="1" fill="#808000"/><rect x="18" y="38" width="2" height="3" fill="#fff"/><rect x="21" y="30" width="1" height="2" fill="#fff"/><path d="M34 34 L36 30 H43 L41 34 Z" fill="#fff" stroke="#000" stroke-width="1"/><rect x="30.5" y="34.5" width="15" height="7" rx="2" fill="#fff" stroke="#000"/><rect x="32" y="37" width="12" height="1.5" fill="#b0b0b0"/><rect x="37" y="37" width="3" height="1.5" fill="#ffff00"/><rect x="31" y="40" width="14" height="2.5" fill="#000"/><rect x="43" y="35" width="2" height="5" fill="#888"/><path d="M57 34.5 A4.5 4 0 1 1 60 40.5" stroke="#8c8c8c" stroke-width="1.5" fill="none"/><path d="M54 32 L54 37 L59 37 Z" fill="#8c8c8c"/><path d="M81 34.5 A4.5 4 0 1 0 78 40.5" stroke="#8c8c8c" stroke-width="1.5" fill="none"/><path d="M84 32 L84 37 L79 37 Z" fill="#8c8c8c"/><path d="M90 28.5 H95.5 M92.75 28.5 V34.5" stroke="#ff0000" stroke-width="1.1"/><path d="M96.5 33.5 L101 38" stroke="#000" stroke-width="1.3"/><path d="M101.5 38.5 L101.5 35 M101.5 38.5 L98 38.5" stroke="#000" stroke-width="1.3"/><rect x="103" y="40" width="2" height="2" fill="#000"/><path d="M115.5 29 V39 M113 31.5 L115.5 29 L118 31.5 M122.5 29 V38.5 M120 36 L122.5 38.5 L125 36 M113 41.5 H125 M115 39.5 L113 41.5 L115 43.5 M123 39.5 L125 41.5 L123 43.5" stroke="#000" stroke-width="1.1" fill="none"/><path d="M138 30.5 H146 M140 28.5 L138 30.5 L140 32.5" stroke="#000" stroke-width="1" fill="none"/><path d="M139 44 V34 H145 V36 H141 V38 H144 V40 H141 V44 Z" fill="#0000ff"/><path d="M158 30.5 H166 M164 28.5 L166 30.5 L164 32.5" stroke="#000" stroke-width="1" fill="none"/><path d="M159 44 V34 H165 V36 H161 V38 H164 V40 H161 V44 Z" fill="#0000ff"/><path d="M176 37 L180 43 L189 29" stroke="#8c8c8c" stroke-width="3" fill="none"/><circle cx="204" cy="36" r="6.3" stroke="#8c8c8c" stroke-width="2.6" fill="none"/><path d="M201.2 33.2 L206.8 38.8 M206.8 33.2 L201.2 38.8" stroke="#8c8c8c" stroke-width="2.4"/><circle cx="226" cy="35" r="4.5" stroke="#1a1a8c" stroke-width="2" fill="none"/><path d="M222.5 38.5 L218 43" stroke="#1a1a8c" stroke-width="2"/><rect x="225" y="34" width="2" height="2" fill="#000"/><path d="M218 28 L233 44 M233 28 L218 44" stroke="#ff0000" stroke-width="1.4"/><path d="M242 30.5 H251 M244 28.5 L242 30.5 L244 32.5" stroke="#000" stroke-width="1" fill="none"/><path d="M245.5 34.5 V41.5 M242 38 H249 M243 35.5 L248 40.5 M248 35.5 L243 40.5" stroke="#ff0000" stroke-width="1"/><path d="M263 30.5 H272 M270 28.5 L272 30.5 L270 32.5" stroke="#000" stroke-width="1" fill="none"/><path d="M266.5 34.5 V41.5 M263 38 H270 M264 35.5 L269 40.5 M269 35.5 L264 40.5" stroke="#ff0000" stroke-width="1"/><path d="M283 29 H286 V30.5 H289 V29 H292 V35 H293 V39 H282 V35 H283 Z" fill="#000"/><rect x="285.6" y="33" width="1.2" height="2" fill="#fff"/><rect x="288.2" y="33" width="1.2" height="2" fill="#fff"/><rect x="284" y="37" width="1" height="1" fill="#fff"/><rect x="290.5" y="37" width="1" height="1" fill="#fff"/><path d="M280 40.8 H283 L286 43.2 H288 L291 40.8 H295" stroke="#10a0a0" stroke-width="1.3" fill="none"/><path d="M280 43.2 H283 L286 40.8 H288 L291 43.2 H295" stroke="#9010a0" stroke-width="1.3" fill="none"/><rect x="281.5" y="41.5" width="1" height="1" fill="#c02020"/><rect x="289" y="41.5" width="1" height="1" fill="#a0a000"/><rect x="293" y="41.5" width="1" height="1" fill="#2020c0"/><path d="M301 36 H315" stroke="#7a7a7a" stroke-width="2"/><path d="M302.5 32.5 Q306 36 302.5 40 M307.5 32.5 Q304 36 307.5 40" stroke="#7a7a7a" stroke-width="1.4" fill="none"/><path d="M322 36 H336" stroke="#7a7a7a" stroke-width="2"/><path d="M331 32.5 Q334.5 36 331 40 M336 32.5 Q332.5 36 336 40" stroke="#7a7a7a" stroke-width="1.4" fill="none"/><path d="M345 31.5 H353 M347 29.5 L345 31.5 L347 33.5" stroke="#000" stroke-width="1" fill="none"/><rect x="346" y="36" width="6" height="2" fill="#ff0000"/><path d="M344 39.5 L349 44 L354 39.5" stroke="#000" stroke-width="1.5" fill="none"/><path d="M366 31.5 H374 M372 29.5 L374 31.5 L372 33.5" stroke="#000" stroke-width="1" fill="none"/><rect x="367" y="36" width="6" height="2" fill="#ff0000"/><path d="M365 39.5 L370 44 L375 39.5" stroke="#000" stroke-width="1.5" fill="none"/><path d="M386.5 35.5 L391.5 31.5 L397.5 36" stroke="#7a7a7a" stroke-width="1.6" fill="none"/><path d="M384.5 33 L385 37.5 L389 36.5 Z" fill="#7a7a7a"/><rect x="388" y="38" width="6" height="2" fill="#7a7a7a"/><path d="M407 36 L413 31.5 L418.5 35.5" stroke="#7a7a7a" stroke-width="1.6" fill="none"/><path d="M420.5 33 L420 37.5 L416 36.5 Z" fill="#7a7a7a"/><rect x="409" y="38" width="6" height="2" fill="#7a7a7a"/><path d="M428.5 35.5 L434 31.5 L440.5 36" stroke="#7a7a7a" stroke-width="1.6" fill="none"/><path d="M426.5 33 L427 37.5 L431 36.5 Z" fill="#7a7a7a"/><rect x="427" y="39" width="14" height="2" fill="#7a7a7a"/><path d="M448 36 L455 31.5 L460.5 35.5" stroke="#7a7a7a" stroke-width="1.6" fill="none"/><path d="M462.5 33 L462 37.5 L458 36.5 Z" fill="#7a7a7a"/><rect x="448" y="39" width="14" height="2" fill="#7a7a7a"/><circle cx="479.5" cy="34.5" r="4.5" stroke="#1a1a8c" stroke-width="2.2" fill="#fff"/><rect x="478.5" y="33.5" width="2" height="2" fill="#000"/><path d="M476 38 L471 43.5" stroke="#1a1a8c" stroke-width="2.6"/><path d="M505 30.5 H499.5 V36.5 H505 M499.5 33.5 H495.5 V42.5 H505 M495.5 38 H491" stroke="#000" stroke-width="1.5" fill="none"/><path d="M515 32.5 H526 M515 35 H526 M515 37.5 H526 M515 40 H526" stroke="#000" stroke-width="1.2"/><path d="M513 31 L518 42 M518 31 L513 42" stroke="#ff0000" stroke-width="1.4"/><path d="M534 32.5 H545 M534 35 H545 M534 37.5 H545 M534 40 H545" stroke="#000" stroke-width="1.2"/><path d="M542 31 L547 42 M547 31 L542 42" stroke="#ff0000" stroke-width="1.4"/><path d="M555 33 L559 30 V32 H564 V36 H559 Z" fill="#c8283c"/><rect x="555" y="35.5" width="14" height="3" fill="#1a3a9a"/><path d="M569 40 L565 43 V41 H560 V38 H565 Z" fill="#c8283c"/><path d="M576.5 44 V34 Q578 29 579.5 34 V44" stroke="#ff9900" stroke-width="1.2" fill="none"/><path d="M580 44 V33 Q581.5 28 583 33 V44" stroke="#ff0000" stroke-width="1.2" fill="none"/><path d="M584 44 V33 Q585.5 29 587 33 V44" stroke="#00c000" stroke-width="1.2" fill="none"/><path d="M588 44 V33 Q589.5 29 591 33 V44" stroke="#0000ff" stroke-width="1.2" fill="none"/><rect x="599" y="29" width="3" height="2" fill="#00a000"/><rect x="603" y="29" width="3" height="2" fill="#00a000"/><rect x="607" y="29" width="3" height="2" fill="#90e090"/><path d="M604.5 32 V41 M602.5 34 L604.5 32 L606.5 34 M602.5 39 L604.5 41 L606.5 39" stroke="#000" stroke-width="1.2" fill="none"/><rect x="599" y="42" width="3" height="3" fill="#000"/><rect x="602" y="42" width="3" height="3" fill="#ff2050"/><rect x="605" y="42" width="3" height="3" fill="#ffd000"/><rect x="608" y="42" width="3" height="3" fill="#6a6ad0"/><text x="617" y="35" font-family="Liberation Mono" font-size="8.5" font-weight="bold" fill="#0000ff">G</text><text x="622" y="35" font-family="Liberation Mono" font-size="8.5" font-weight="bold" fill="#ff0000">A</text><text x="627" y="35" font-family="Liberation Mono" font-size="8.5" font-weight="bold" fill="#008000">T</text><text x="617" y="44" font-family="Liberation Mono" font-size="8.5" font-weight="bold" fill="#000">ASP</text><path d="M621 36 L625 40" stroke="#c06000" stroke-width="1.5"/><text x="638" y="36" font-family="Liberation Sans" font-size="9" font-weight="bold" fill="#c00000">1</text><text x="643" y="40" font-family="Liberation Sans" font-size="9" font-weight="bold" fill="#0000ff">2</text><text x="647" y="44" font-family="Liberation Sans" font-size="9" font-weight="bold" fill="#006000">3</text><rect x="658.5" y="31" width="15" height="9" rx="4.5" fill="#3c3c3c"/><rect x="661" y="34" width="4" height="2" fill="#aaa"/><rect x="667" y="34" width="4" height="2" fill="#aaa"/></svg>
<svg class="a" style="left:0;top:0" width="24" height="24"><path d="M4.5 7 H11.5" stroke="#1a6aa8" stroke-width="2"/><path d="M4.5 4 V9.5 M11.5 4 V9.5" stroke="#1a6aa8" stroke-width="1.2"/><path d="M6 11.5 H14 M8.2 9.3 L6 11.5 L8.2 13.7 M14 9.3 V13.7" stroke="#b01040" stroke-width="1.5" fill="none"/><path d="M11.5 15.7 H18.5 M16.3 13.3 L18.7 15.7 L16.3 18.1" stroke="#1a6aa8" stroke-width="1.8" fill="none"/><rect x="11" y="18" width="1.2" height="1.2" fill="#1a6aa8"/><rect x="16" y="18" width="1.2" height="1.2" fill="#1a6aa8"/></svg>
</body></html>
